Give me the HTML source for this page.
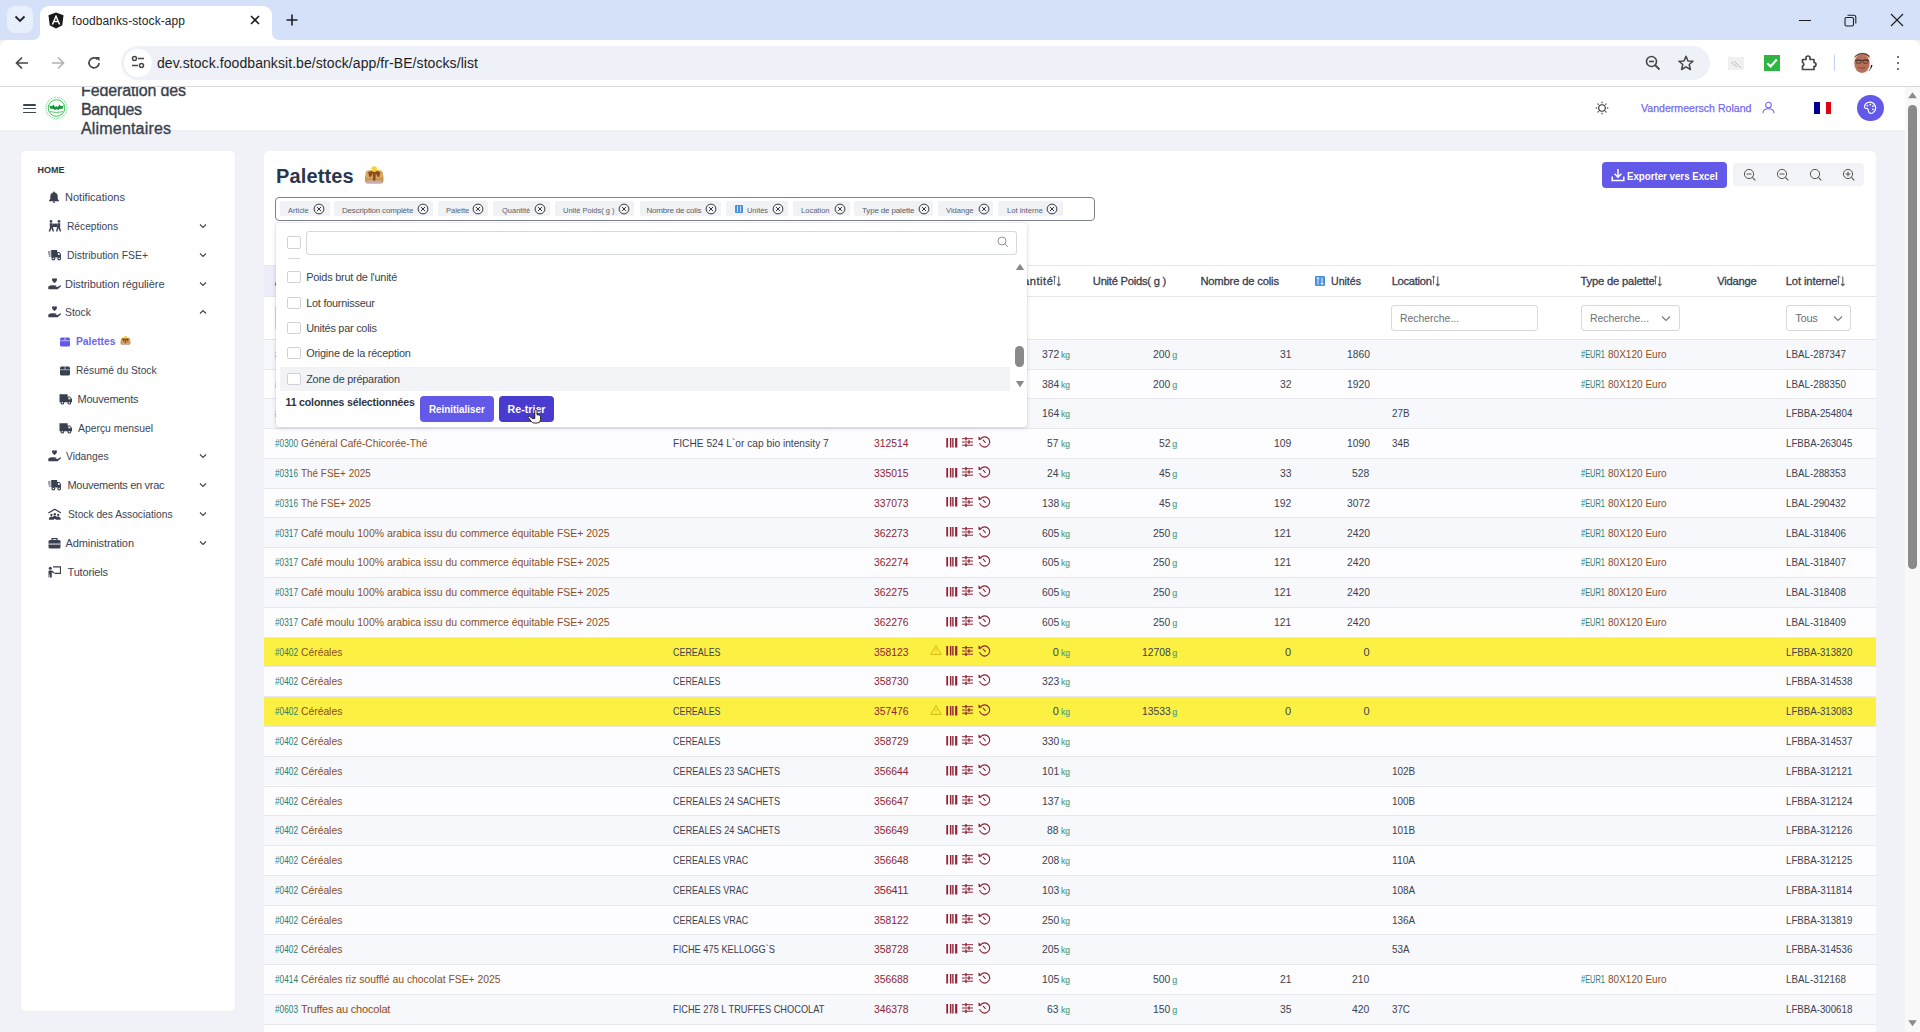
<!DOCTYPE html><html><head><meta charset="utf-8"><title>foodbanks-stock-app</title><style>
*{margin:0;padding:0}
html,body{width:1920px;height:1032px;overflow:hidden}
body{position:relative;background:#f1f2f7;font-family:"Liberation Sans",sans-serif;}
.t{position:absolute;white-space:nowrap}
.r{position:absolute;display:block}
</style></head><body><div class="r" style="left:0.00px;top:87.00px;width:1905.00px;height:43.00px;background:#ffffff;box-shadow:0 1px 2px rgba(0,0,0,0.02);"></div>
<div class="r" style="left:23.00px;top:104.30px;width:13.00px;height:1.40px;background:#3d4350;border-radius:1px;"></div>
<div class="r" style="left:23.00px;top:107.90px;width:13.00px;height:1.40px;background:#3d4350;border-radius:1px;"></div>
<div class="r" style="left:23.00px;top:111.50px;width:13.00px;height:1.40px;background:#3d4350;border-radius:1px;"></div>
<svg class="r" style="left:45.00px;top:96.00px;" width="23" height="24" viewBox="0 0 23 24"><circle cx="11.5" cy="12" r="10.6" fill="none" stroke="#8fdc9f" stroke-width="1.1" stroke-dasharray="1.2 0.8"/><circle cx="11.5" cy="12" r="8.3" fill="none" stroke="#3cc45a" stroke-width="1"/><path d="M4.2 9.6 L7 10.2 L8.6 8.4 L10 11 L11.5 10.3 L13 11 L14.4 8.4 L16 10.2 L18.8 9.6 L17.3 13 Q14.5 12.4 13.5 14 L11.5 13.2 L9.5 14 Q8.5 12.4 5.7 13 Z" fill="#14963a"/><path d="M4.6 15.6 Q11.5 17.4 18.4 15.6" fill="none" stroke="#3cc45a" stroke-width="0.9"/></svg>
<div class="t" style="left:81.00px;top:78.00px;font-size:16px;line-height:26px;color:#3a3f4b;letter-spacing:-0.133px;-webkit-text-stroke:0.35px #3a3f4b;">Federation des</div>
<div class="t" style="left:81.00px;top:97.00px;font-size:16px;line-height:26px;color:#3a3f4b;letter-spacing:-0.361px;-webkit-text-stroke:0.35px #3a3f4b;">Banques</div>
<div class="t" style="left:81.00px;top:116.00px;font-size:16px;line-height:26px;color:#3a3f4b;letter-spacing:0.179px;-webkit-text-stroke:0.35px #3a3f4b;">Alimentaires</div>
<svg class="r" style="left:1595.00px;top:101.00px;" width="14" height="14" viewBox="0 0 14 14"><circle cx="7" cy="7" r="3.3" fill="none" stroke="#333" stroke-width="1.1"/><path d="M11.80 7.00 L13.30 7.00" stroke="#333" stroke-width="1.1"/><path d="M10.39 10.39 L11.45 11.45" stroke="#333" stroke-width="1.1"/><path d="M7.00 11.80 L7.00 13.30" stroke="#333" stroke-width="1.1"/><path d="M3.61 10.39 L2.55 11.45" stroke="#333" stroke-width="1.1"/><path d="M2.20 7.00 L0.70 7.00" stroke="#333" stroke-width="1.1"/><path d="M3.61 3.61 L2.55 2.55" stroke="#333" stroke-width="1.1"/><path d="M7.00 2.20 L7.00 0.70" stroke="#333" stroke-width="1.1"/><path d="M10.39 3.61 L11.45 2.55" stroke="#333" stroke-width="1.1"/></svg>
<div class="t" style="left:1641.00px;top:98.00px;font-size:11.6px;line-height:19px;color:#7468f0;transform:scaleX(0.9132);transform-origin:0 50%;-webkit-text-stroke:0.25px #7468f0;">Vandermeersch Roland</div>
<svg class="r" style="left:1762.00px;top:101.00px;" width="13" height="13" viewBox="0 0 13 13"><circle cx="6.5" cy="4" r="2.8" fill="none" stroke="#7468f0" stroke-width="1.1"/><path d="M1 12.2 Q1 7.8 6.5 7.8 Q12 7.8 12 12.2" fill="none" stroke="#7468f0" stroke-width="1.1"/></svg>
<div class="r" style="left:1814.00px;top:102.30px;width:5.50px;height:12.00px;background:#000091;"></div>
<div class="r" style="left:1825.50px;top:102.30px;width:5.50px;height:12.00px;background:#e1000f;"></div>
<div class="r" style="left:1857.00px;top:94.80px;width:26.80px;height:26.70px;background:#6259e8;border-radius:50%;"></div>
<svg class="r" style="left:1863.00px;top:101.00px;" width="14" height="14" viewBox="0 0 14 14"><path d="M7 1.2 C3.5 1.2 1.2 3.6 1.5 6.4 C1.8 7.6 3 7.3 4 7.4 C5.5 7.6 5.2 9.5 5.8 11 C6.4 12.6 8.7 12.8 10.2 11.6 C12.5 9.8 13 6.6 12 4.4 C11 2.4 9.2 1.2 7 1.2 Z" fill="none" stroke="#fff" stroke-width="1.2"/><circle cx="4.4" cy="4.6" r="0.9" fill="#fff"/><circle cx="7.3" cy="3.6" r="0.9" fill="#fff"/><circle cx="10" cy="5.2" r="0.9" fill="#fff"/><circle cx="9.9" cy="8.3" r="0.9" fill="#fff"/></svg>
<div class="r" style="left:1905.00px;top:87.00px;width:15.00px;height:945.00px;background:#f8f8f8;"></div>
<svg class="r" style="left:1907.00px;top:91.00px;" width="11" height="8" viewBox="0 0 11 8"><path d="M1.2 7.2 L5.5 1.2 L9.8 7.2 Z" fill="#8a8a8a"/></svg>
<div class="r" style="left:1908.30px;top:105.20px;width:8.60px;height:463.60px;background:#8a8a8a;border-radius:4.3px;"></div>
<svg class="r" style="left:1907.00px;top:1019.00px;" width="11" height="8" viewBox="0 0 11 8"><path d="M1.2 1.2 L5.5 7.2 L9.8 1.2 Z" fill="#8a8a8a"/></svg>
<div class="r" style="left:21.00px;top:151.00px;width:213.50px;height:860.00px;background:#ffffff;border-radius:5px;box-shadow:0 0 2px rgba(60,60,90,0.04);"></div>
<div class="t" style="left:37.50px;top:163.00px;font-size:9px;line-height:14px;color:#2e3442;font-weight:bold;">HOME</div>
<svg class="r" style="left:48.00px;top:190.70px;" width="13" height="12" viewBox="0 0 13 12"><path d="M6 0.6 C6.5 0.6 6.8 1 6.8 1.4 C8.8 1.8 9.7 3.4 9.7 5.4 V7.6 Q9.8 8.6 11 9.6 V10.2 H1 V9.6 Q2.2 8.6 2.3 7.6 V5.4 C2.3 3.4 3.2 1.8 5.2 1.4 C5.2 1 5.5 0.6 6 0.6 Z" fill="#3a4050"/><path d="M4.7 10.6 H7.3 Q7.2 12 6 12 Q4.8 12 4.7 10.6 Z" fill="#3a4050"/></svg>
<div class="t" style="left:65.00px;top:188.00px;font-size:11px;line-height:18px;color:#3d4352;letter-spacing:0.007px;">Notifications</div>
<svg class="r" style="left:48.00px;top:219.70px;" width="13" height="12" viewBox="0 0 13 12"><circle cx="3" cy="1.4" r="1.35" fill="#3a4050"/><circle cx="11" cy="1.4" r="1.35" fill="#3a4050"/><path d="M1.6 3.3 H4.4 L5 7.2 L6 11.6 H4.6 L3.6 8 L2.2 11.6 H0.6 L2 7.4 Z" fill="#3a4050"/><path d="M12.4 3.3 H9.6 L9 7.2 L8 11.6 H9.4 L10.4 8 L11.8 11.6 H13.4 L12 7.4 Z" fill="#3a4050"/><rect x="4.6" y="3.6" width="4.8" height="3.4" fill="#3a4050"/></svg>
<div class="t" style="left:67.00px;top:217.00px;font-size:11px;line-height:18px;color:#3d4352;transform:scaleX(0.9267);transform-origin:0 50%;">Réceptions</div>
<svg class="r" style="left:199.00px;top:223.00px;" width="8" height="6" viewBox="0 0 8 6"><path d="M1 1.5 L4 4.5 L7 1.5" fill="none" stroke="#3d4352" stroke-width="1.1"/></svg>
<svg class="r" style="left:48.00px;top:248.70px;" width="13" height="12" viewBox="0 0 13 12"><path d="M3.2 1 H9.2 V3 H11.4 L13.6 5.6 V8.6 H3.2 Z" fill="#3a4050"/><path d="M9.9 3.9 H11 L12.4 5.7 H9.9 Z" fill="#fff"/><path d="M0 3 H2.6 M0.3 5 H2.6 M0.8 7 H2.6" stroke="#3a4050" stroke-width="1.1"/><circle cx="5.4" cy="9.6" r="1.9" fill="#3a4050"/><circle cx="5.4" cy="9.6" r="0.75" fill="#fff"/><circle cx="11.2" cy="9.6" r="1.9" fill="#3a4050"/><circle cx="11.2" cy="9.6" r="0.75" fill="#fff"/></svg>
<div class="t" style="left:67.00px;top:246.00px;font-size:11px;line-height:18px;color:#3d4352;transform:scaleX(0.9430);transform-origin:0 50%;">Distribution FSE+</div>
<svg class="r" style="left:199.00px;top:252.00px;" width="8" height="6" viewBox="0 0 8 6"><path d="M1 1.5 L4 4.5 L7 1.5" fill="none" stroke="#3d4352" stroke-width="1.1"/></svg>
<svg class="r" style="left:48.00px;top:277.70px;" width="13" height="12" viewBox="0 0 13 12"><path d="M6.5 0.8 C5.8 0 4 0 4 1.8 C4 3.3 6.5 5 6.5 5 C6.5 5 9 3.3 9 1.8 C9 0 7.2 0 6.5 0.8 Z" fill="#3a4050"/><path d="M0.3 8.5 Q2.5 7 5 7.3 L8 7.6 Q9 8 8 8.8 H5.5 L9.5 9 L12.5 7.2 Q13.3 7.5 12.8 8.5 L9.5 11.2 H0.3 Z" fill="#3a4050"/></svg>
<div class="t" style="left:65.00px;top:275.00px;font-size:11px;line-height:18px;color:#3d4352;letter-spacing:-0.066px;">Distribution régulière</div>
<svg class="r" style="left:199.00px;top:281.00px;" width="8" height="6" viewBox="0 0 8 6"><path d="M1 1.5 L4 4.5 L7 1.5" fill="none" stroke="#3d4352" stroke-width="1.1"/></svg>
<svg class="r" style="left:48.00px;top:305.70px;" width="13" height="12" viewBox="0 0 13 12"><path d="M6.5 0.8 C5.8 0 4 0 4 1.8 C4 3.3 6.5 5 6.5 5 C6.5 5 9 3.3 9 1.8 C9 0 7.2 0 6.5 0.8 Z" fill="#3a4050"/><path d="M0.3 8.5 Q2.5 7 5 7.3 L8 7.6 Q9 8 8 8.8 H5.5 L9.5 9 L12.5 7.2 Q13.3 7.5 12.8 8.5 L9.5 11.2 H0.3 Z" fill="#3a4050"/></svg>
<div class="t" style="left:65.00px;top:303.00px;font-size:11px;line-height:18px;color:#3d4352;transform:scaleX(0.9451);transform-origin:0 50%;">Stock</div>
<svg class="r" style="left:199.00px;top:309.00px;" width="8" height="6" viewBox="0 0 8 6"><path d="M1 4.5 L4 1.5 L7 4.5" fill="none" stroke="#3d4352" stroke-width="1.1"/></svg>
<svg class="r" style="left:59.00px;top:363.70px;" width="13" height="12" viewBox="0 0 13 12"><rect x="1" y="2.5" width="10" height="9" rx="1.5" fill="#3a4050"/><rect x="1" y="5.3" width="10" height="0.9" fill="#fff" opacity="0.6"/><rect x="5.5" y="2.5" width="1" height="3" fill="#fff" opacity="0.6"/></svg>
<div class="t" style="left:76.00px;top:361.00px;font-size:11px;line-height:18px;color:#3d4352;transform:scaleX(0.9272);transform-origin:0 50%;">Résumé du Stock</div>
<svg class="r" style="left:59.00px;top:392.70px;" width="13" height="12" viewBox="0 0 13 12"><path d="M0.5 1.2 H8.6 V3.4 H10.9 L13.2 6.2 V9.2 H0.5 Z" fill="#3a4050"/><path d="M9.4 4.3 H10.4 L11.9 6.2 H9.4 Z" fill="#fff"/><circle cx="3.4" cy="9.7" r="1.9" fill="#3a4050"/><circle cx="3.4" cy="9.7" r="0.75" fill="#fff"/><circle cx="10.3" cy="9.7" r="1.9" fill="#3a4050"/><circle cx="10.3" cy="9.7" r="0.75" fill="#fff"/></svg>
<div class="t" style="left:77.50px;top:390.00px;font-size:11px;line-height:18px;color:#3d4352;letter-spacing:-0.219px;">Mouvements</div>
<svg class="r" style="left:59.00px;top:421.70px;" width="13" height="12" viewBox="0 0 13 12"><path d="M0.5 1.2 H8.6 V3.4 H10.9 L13.2 6.2 V9.2 H0.5 Z" fill="#3a4050"/><path d="M9.4 4.3 H10.4 L11.9 6.2 H9.4 Z" fill="#fff"/><circle cx="3.4" cy="9.7" r="1.9" fill="#3a4050"/><circle cx="3.4" cy="9.7" r="0.75" fill="#fff"/><circle cx="10.3" cy="9.7" r="1.9" fill="#3a4050"/><circle cx="10.3" cy="9.7" r="0.75" fill="#fff"/></svg>
<div class="t" style="left:77.50px;top:419.00px;font-size:11px;line-height:18px;color:#3d4352;transform:scaleX(0.9435);transform-origin:0 50%;">Aperçu mensuel</div>
<svg class="r" style="left:48.00px;top:449.70px;" width="13" height="12" viewBox="0 0 13 12"><path d="M6.5 0.8 C5.8 0 4 0 4 1.8 C4 3.3 6.5 5 6.5 5 C6.5 5 9 3.3 9 1.8 C9 0 7.2 0 6.5 0.8 Z" fill="#3a4050"/><path d="M0.3 8.5 Q2.5 7 5 7.3 L8 7.6 Q9 8 8 8.8 H5.5 L9.5 9 L12.5 7.2 Q13.3 7.5 12.8 8.5 L9.5 11.2 H0.3 Z" fill="#3a4050"/></svg>
<div class="t" style="left:66.00px;top:447.00px;font-size:11px;line-height:18px;color:#3d4352;transform:scaleX(0.9306);transform-origin:0 50%;">Vidanges</div>
<svg class="r" style="left:199.00px;top:453.00px;" width="8" height="6" viewBox="0 0 8 6"><path d="M1 1.5 L4 4.5 L7 1.5" fill="none" stroke="#3d4352" stroke-width="1.1"/></svg>
<svg class="r" style="left:48.00px;top:478.70px;" width="13" height="12" viewBox="0 0 13 12"><path d="M3.2 1 H9.2 V3 H11.4 L13.6 5.6 V8.6 H3.2 Z" fill="#3a4050"/><path d="M9.9 3.9 H11 L12.4 5.7 H9.9 Z" fill="#fff"/><path d="M0 3 H2.6 M0.3 5 H2.6 M0.8 7 H2.6" stroke="#3a4050" stroke-width="1.1"/><circle cx="5.4" cy="9.6" r="1.9" fill="#3a4050"/><circle cx="5.4" cy="9.6" r="0.75" fill="#fff"/><circle cx="11.2" cy="9.6" r="1.9" fill="#3a4050"/><circle cx="11.2" cy="9.6" r="0.75" fill="#fff"/></svg>
<div class="t" style="left:67.50px;top:476.00px;font-size:11px;line-height:18px;color:#3d4352;letter-spacing:-0.300px;">Mouvements en vrac</div>
<svg class="r" style="left:199.00px;top:482.00px;" width="8" height="6" viewBox="0 0 8 6"><path d="M1 1.5 L4 4.5 L7 1.5" fill="none" stroke="#3d4352" stroke-width="1.1"/></svg>
<svg class="r" style="left:48.00px;top:507.70px;" width="13" height="12" viewBox="0 0 13 12"><path d="M6.8 0.6 L13.6 4.6 L12.9 5.5 L6.8 2 L0.7 5.5 L0 4.6 Z" fill="#3a4050"/><circle cx="3.4" cy="7" r="1.15" fill="#3a4050"/><circle cx="6.8" cy="6.3" r="1.2" fill="#3a4050"/><circle cx="10.2" cy="7" r="1.15" fill="#3a4050"/><path d="M0.8 11.8 Q1.2 8.5 3.4 8.5 Q5.6 8.5 6 11.8 Z M7.6 11.8 Q8 8.5 10.2 8.5 Q12.4 8.5 12.8 11.8 Z M4.2 11 Q4.6 7.8 6.8 7.8 Q9 7.8 9.4 11 Z" fill="#3a4050"/></svg>
<div class="t" style="left:67.50px;top:505.00px;font-size:11px;line-height:18px;color:#3d4352;transform:scaleX(0.9289);transform-origin:0 50%;">Stock des Associations</div>
<svg class="r" style="left:199.00px;top:511.00px;" width="8" height="6" viewBox="0 0 8 6"><path d="M1 1.5 L4 4.5 L7 1.5" fill="none" stroke="#3d4352" stroke-width="1.1"/></svg>
<svg class="r" style="left:48.00px;top:536.70px;" width="13" height="12" viewBox="0 0 13 12"><path d="M4 3 V1.6 H9 V3" fill="none" stroke="#3a4050" stroke-width="1.2"/><rect x="0.5" y="3" width="12" height="8.5" rx="1.5" fill="#3a4050"/><rect x="0.5" y="6.6" width="12" height="0.9" fill="#fff"/></svg>
<div class="t" style="left:65.50px;top:534.00px;font-size:11px;line-height:18px;color:#3d4352;letter-spacing:-0.092px;">Administration</div>
<svg class="r" style="left:199.00px;top:540.00px;" width="8" height="6" viewBox="0 0 8 6"><path d="M1 1.5 L4 4.5 L7 1.5" fill="none" stroke="#3d4352" stroke-width="1.1"/></svg>
<svg class="r" style="left:48.00px;top:565.70px;" width="13" height="12" viewBox="0 0 13 12"><circle cx="2.3" cy="2.2" r="1.5" fill="#3a4050"/><path d="M0.8 4.5 H4 L6.5 6.5 L5.8 7.3 L3.8 6.2 V11.5 H1.8 V8.5 H1.2 V11.5 H0.5 V5 Z" fill="#3a4050"/><path d="M5 0.8 H12.5 V7.3 H6.5" fill="none" stroke="#3a4050" stroke-width="1.2"/></svg>
<div class="t" style="left:67.50px;top:563.00px;font-size:11px;line-height:18px;color:#3d4352;letter-spacing:-0.159px;">Tutoriels</div>
<svg class="r" style="left:59.00px;top:334.70px;" width="13" height="12" viewBox="0 0 13 12"><rect x="1" y="2.5" width="10" height="9" rx="1.5" fill="#6259e8"/><rect x="1" y="5.3" width="10" height="0.9" fill="#fff" opacity="0.6"/><rect x="5.5" y="2.5" width="1" height="3" fill="#fff" opacity="0.6"/></svg>
<div class="t" style="left:76.00px;top:332.00px;font-size:11.2px;line-height:18px;color:#6f63ee;font-weight:bold;transform:scaleX(0.9195);transform-origin:0 50%;">Palettes</div>
<svg class="r" style="left:119.50px;top:334.50px;" width="11" height="11" viewBox="0 0 11 11"><g transform="scale(0.55)"><rect x="1" y="9" width="18" height="9" rx="3" fill="#c89650"/><rect x="1.5" y="5" width="17" height="8" rx="3.5" fill="#d9a95c"/><path d="M4 7 Q10 3.5 16 7 L15 11 Q14 13 13 11 L11.5 8 L11 16 L9 16 L8.5 8 L7 11 Q6 13 5 11 Z" fill="#8a4b22"/><circle cx="10" cy="4" r="2.8" fill="#f5d23a"/><rect x="2" y="15" width="16" height="3" rx="1.5" fill="#c9b7d8" opacity="0.7"/></g></svg>
<div class="r" style="left:264.00px;top:151.00px;width:1612.00px;height:889.00px;background:#ffffff;border-radius:5px 5px 0 0;"></div>
<div class="t" style="left:276.00px;top:160.00px;font-size:20px;line-height:32px;color:#2a3650;font-weight:bold;letter-spacing:0.141px;">Palettes</div>
<svg class="r" style="left:364.30px;top:165.00px;" width="20.5" height="20.5" viewBox="0 0 20.5 20.5"><g transform="scale(1.025)"><rect x="1" y="9" width="18" height="9" rx="3" fill="#c89650"/><rect x="1.5" y="5" width="17" height="8" rx="3.5" fill="#d9a95c"/><path d="M4 7 Q10 3.5 16 7 L15 11 Q14 13 13 11 L11.5 8 L11 16 L9 16 L8.5 8 L7 11 Q6 13 5 11 Z" fill="#8a4b22"/><circle cx="10" cy="4" r="2.8" fill="#f5d23a"/><rect x="2" y="15" width="16" height="3" rx="1.5" fill="#c9b7d8" opacity="0.7"/></g></svg>
<div class="r" style="left:1602.00px;top:162.00px;width:124.70px;height:25.80px;background:#6259e8;border-radius:4px;"></div>
<svg class="r" style="left:1611.00px;top:167.50px;" width="14" height="14" viewBox="0 0 14 14"><path d="M7 1 V9 M3.6 5.8 L7 9.2 L10.4 5.8" fill="none" stroke="#fff" stroke-width="1.5"/><path d="M1.2 8.5 V12.5 H12.8 V8.5" fill="none" stroke="#fff" stroke-width="1.5"/></svg>
<div class="t" style="left:1627.00px;top:168.00px;font-size:10.8px;line-height:17px;color:#ffffff;font-weight:bold;transform:scaleX(0.8983);transform-origin:0 50%;">Exporter vers Excel</div>
<div class="r" style="left:1733.00px;top:163.30px;width:131.00px;height:23.00px;background:#f2f3f7;border-radius:4px;"></div>
<svg class="r" style="left:1742.50px;top:168.00px;" width="13" height="13" viewBox="0 0 13 13"><circle cx="6" cy="6" r="4.6" fill="none" stroke="#555" stroke-width="1"/><path d="M9.4 9.4 L12.3 12.3" stroke="#555" stroke-width="1.1"/><path d="M3.5 6 H8.5" stroke="#555" stroke-width="1"/></svg>
<svg class="r" style="left:1775.50px;top:168.00px;" width="13" height="13" viewBox="0 0 13 13"><circle cx="6" cy="6" r="4.6" fill="none" stroke="#555" stroke-width="1"/><path d="M9.4 9.4 L12.3 12.3" stroke="#555" stroke-width="1.1"/><path d="M3.5 6 H8.5" stroke="#555" stroke-width="1"/></svg>
<svg class="r" style="left:1808.50px;top:168.00px;" width="13" height="13" viewBox="0 0 13 13"><circle cx="6" cy="6" r="4.6" fill="none" stroke="#555" stroke-width="1"/><path d="M9.4 9.4 L12.3 12.3" stroke="#555" stroke-width="1.1"/></svg>
<svg class="r" style="left:1841.50px;top:168.00px;" width="13" height="13" viewBox="0 0 13 13"><circle cx="6" cy="6" r="4.6" fill="none" stroke="#555" stroke-width="1"/><path d="M9.4 9.4 L12.3 12.3" stroke="#555" stroke-width="1.1"/><path d="M3.5 6 H8.5 M6 3.5 V8.5" stroke="#555" stroke-width="1"/></svg>
<div class="r" style="left:264.00px;top:266.10px;width:396.00px;height:29.70px;background:#ededf9;"></div>
<div class="r" style="left:264.00px;top:265.10px;width:1612.00px;height:1.00px;background:#e6e7ee;"></div>
<div class="r" style="left:264.00px;top:295.80px;width:1612.00px;height:1.00px;background:#e6e7ee;"></div>
<div class="t" style="left:275.00px;top:272.00px;font-size:11.2px;line-height:18px;color:#3a4050;transform:scaleX(0.9293);transform-origin:0 50%;-webkit-text-stroke:0.3px #3a4050;">Article</div>
<svg class="r" style="left:302.42px;top:274.50px;" width="10" height="12" viewBox="0 0 10 12"><path d="M2.5 0.8 V9.5 M1 2.6 L2.5 0.8 L4 2.6" fill="none" stroke="#5a5f6c" stroke-width="0.9"/><path d="M6.8 1.5 V10.8 M5.1 9 L6.8 10.8 L8.5 9" fill="none" stroke="#5a5f6c" stroke-width="1.1"/></svg>
<div class="t" style="left:673.00px;top:272.00px;font-size:11.2px;line-height:18px;color:#3a4050;letter-spacing:-0.248px;-webkit-text-stroke:0.3px #3a4050;">Description complète</div>
<div class="t" style="left:873.00px;top:272.00px;font-size:11.2px;line-height:18px;color:#3a4050;transform:scaleX(0.9334);transform-origin:0 50%;-webkit-text-stroke:0.3px #3a4050;">Palette</div>
<svg class="r" style="left:904.05px;top:274.50px;" width="10" height="12" viewBox="0 0 10 12"><path d="M2.5 0.8 V9.5 M1 2.6 L2.5 0.8 L4 2.6" fill="none" stroke="#5a5f6c" stroke-width="0.9"/><path d="M6.8 1.5 V10.8 M5.1 9 L6.8 10.8 L8.5 9" fill="none" stroke="#5a5f6c" stroke-width="1.1"/></svg>
<div class="t" style="left:1007.00px;top:272.00px;font-size:11.2px;line-height:18px;color:#3a4050;letter-spacing:0.523px;-webkit-text-stroke:0.3px #3a4050;">Quantité</div>
<svg class="r" style="left:1051.50px;top:274.50px;" width="10" height="12" viewBox="0 0 10 12"><path d="M2.5 0.8 V9.5 M1 2.6 L2.5 0.8 L4 2.6" fill="none" stroke="#5a5f6c" stroke-width="0.9"/><path d="M6.8 1.5 V10.8 M5.1 9 L6.8 10.8 L8.5 9" fill="none" stroke="#5a5f6c" stroke-width="1.1"/></svg>
<div class="t" style="left:1092.80px;top:272.00px;font-size:11.2px;line-height:18px;color:#3a4050;letter-spacing:-0.246px;-webkit-text-stroke:0.3px #3a4050;">Unité Poids( g )</div>
<div class="t" style="left:1200.40px;top:272.00px;font-size:11.2px;line-height:18px;color:#3a4050;letter-spacing:-0.159px;-webkit-text-stroke:0.3px #3a4050;">Nombre de colis</div>
<div class="t" style="left:1331.00px;top:272.00px;font-size:11.2px;line-height:18px;color:#3a4050;transform:scaleX(0.9450);transform-origin:0 50%;-webkit-text-stroke:0.3px #3a4050;">Unités</div>
<div class="t" style="left:1391.70px;top:272.00px;font-size:11.2px;line-height:18px;color:#3a4050;letter-spacing:-0.292px;-webkit-text-stroke:0.3px #3a4050;">Location</div>
<svg class="r" style="left:1430.50px;top:274.50px;" width="10" height="12" viewBox="0 0 10 12"><path d="M2.5 0.8 V9.5 M1 2.6 L2.5 0.8 L4 2.6" fill="none" stroke="#5a5f6c" stroke-width="0.9"/><path d="M6.8 1.5 V10.8 M5.1 9 L6.8 10.8 L8.5 9" fill="none" stroke="#5a5f6c" stroke-width="1.1"/></svg>
<div class="t" style="left:1580.50px;top:272.00px;font-size:11.2px;line-height:18px;color:#3a4050;letter-spacing:-0.171px;-webkit-text-stroke:0.3px #3a4050;">Type de palette</div>
<svg class="r" style="left:1653.20px;top:274.50px;" width="10" height="12" viewBox="0 0 10 12"><path d="M2.5 0.8 V9.5 M1 2.6 L2.5 0.8 L4 2.6" fill="none" stroke="#5a5f6c" stroke-width="0.9"/><path d="M6.8 1.5 V10.8 M5.1 9 L6.8 10.8 L8.5 9" fill="none" stroke="#5a5f6c" stroke-width="1.1"/></svg>
<div class="t" style="left:1717.20px;top:272.00px;font-size:11.2px;line-height:18px;color:#3a4050;letter-spacing:-0.217px;-webkit-text-stroke:0.3px #3a4050;">Vidange</div>
<div class="t" style="left:1785.70px;top:272.00px;font-size:11.2px;line-height:18px;color:#3a4050;letter-spacing:-0.103px;-webkit-text-stroke:0.3px #3a4050;">Lot interne</div>
<svg class="r" style="left:1836.10px;top:274.50px;" width="10" height="12" viewBox="0 0 10 12"><path d="M2.5 0.8 V9.5 M1 2.6 L2.5 0.8 L4 2.6" fill="none" stroke="#5a5f6c" stroke-width="0.9"/><path d="M6.8 1.5 V10.8 M5.1 9 L6.8 10.8 L8.5 9" fill="none" stroke="#5a5f6c" stroke-width="1.1"/></svg>
<svg class="r" style="left:1315.00px;top:275.50px;" width="10" height="10" viewBox="0 0 10 10"><rect x="0" y="0" width="10" height="10" rx="1" fill="#4a8fe0"/><path d="M3 1.5 V8.5 M7 1.5 V8.5 M1.8 3 L3 1.5 L4.2 3 M5.8 7 L7 8.5 L8.2 7" fill="none" stroke="#fff" stroke-width="0.9"/></svg>
<div class="r" style="left:275.00px;top:305.40px;width:285.00px;height:25.20px;background:#ffffff;border:1px solid #d7d9de;border-radius:3px;box-sizing:border-box;"></div>
<div class="t" style="left:284.00px;top:309.00px;font-size:11px;line-height:18px;color:#6b6f78;transform:scaleX(0.9470);transform-origin:0 50%;">Recherche...</div>
<div class="r" style="left:673.00px;top:305.40px;width:187.00px;height:25.20px;background:#ffffff;border:1px solid #d7d9de;border-radius:3px;box-sizing:border-box;"></div>
<div class="t" style="left:682.00px;top:309.00px;font-size:11px;line-height:18px;color:#6b6f78;transform:scaleX(0.9470);transform-origin:0 50%;">Recherche...</div>
<div class="r" style="left:1391.20px;top:305.40px;width:146.40px;height:25.20px;background:#ffffff;border:1px solid #d7d9de;border-radius:3px;box-sizing:border-box;"></div>
<div class="t" style="left:1400.20px;top:309.00px;font-size:11px;line-height:18px;color:#6b6f78;transform:scaleX(0.9470);transform-origin:0 50%;">Recherche...</div>
<div class="r" style="left:1580.50px;top:305.40px;width:99.00px;height:25.20px;background:#ffffff;border:1px solid #d7d9de;border-radius:3px;box-sizing:border-box;"></div>
<div class="t" style="left:1589.50px;top:309.00px;font-size:11px;line-height:18px;color:#6b6f78;transform:scaleX(0.9470);transform-origin:0 50%;">Recherche...</div>
<svg class="r" style="left:1661.00px;top:315.00px;" width="10" height="7" viewBox="0 0 10 7"><path d="M1 1.5 L5 5.5 L9 1.5" fill="none" stroke="#777" stroke-width="1.1"/></svg>
<div class="r" style="left:1786.20px;top:305.40px;width:65.20px;height:25.20px;background:#ffffff;border:1px solid #d7d9de;border-radius:3px;box-sizing:border-box;"></div>
<div class="t" style="left:1795.20px;top:309.00px;font-size:11px;line-height:18px;color:#6b6f78;letter-spacing:-0.214px;">Tous</div>
<svg class="r" style="left:1832.90px;top:315.00px;" width="10" height="7" viewBox="0 0 10 7"><path d="M1 1.5 L5 5.5 L9 1.5" fill="none" stroke="#777" stroke-width="1.1"/></svg>
<div class="r" style="left:264.00px;top:338.80px;width:1612.00px;height:1.00px;background:#e6e7ee;"></div>
<div class="r" style="left:264.00px;top:339.80px;width:1612.00px;height:28.78px;background:#f7f8fc;"></div>
<div class="r" style="left:264.00px;top:368.58px;width:1612.00px;height:1.00px;background:#e7e8ee;"></div>
<div class="t" style="left:275.00px;top:346.00px;font-size:10.4px;line-height:17px;color:#2a7d70;transform:scaleX(0.7953);transform-origin:0 50%;">#0300</div>
<div class="t" style="left:301.00px;top:345.00px;font-size:11px;line-height:18px;color:#8c4e1c;transform:scaleX(0.9310);transform-origin:0 50%;">Général Café-Chicorée-Thé</div>
<div class="t" style="left:673.00px;top:345.00px;font-size:11px;line-height:18px;color:#3b4150;transform:scaleX(0.9265);transform-origin:0 50%;">FICHE 524 L`or cap bio intensity 7</div>
<div class="t" style="left:874.00px;top:345.00px;font-size:11px;line-height:18px;color:#8e2436;transform:scaleX(0.9400);transform-origin:0 50%;">312514</div>
<svg class="r" style="left:946.00px;top:348.59px;" width="12" height="10" viewBox="0 0 12 10"><rect x="0.3" y="0" width="1.8" height="9.5" fill="#8e2436"/><rect x="3.9" y="0" width="1.5" height="9.5" fill="#8e2436"/><rect x="6.2" y="0" width="1.4" height="9.5" fill="#8e2436"/><rect x="9.1" y="0" width="2.2" height="9.5" fill="#8e2436"/></svg>
<svg class="r" style="left:962.30px;top:347.89px;" width="12" height="10" viewBox="0 0 12 10"><path d="M0 1.7 H11 M0 5 H11 M0 8.2 H11" stroke="#8e2436" stroke-width="1"/><path d="M4 0 V3.4 M7 3.3 V6.7 M4 6.5 V9.9" stroke="#8e2436" stroke-width="1.4"/></svg>
<svg class="r" style="left:977.50px;top:346.89px;" width="13" height="12" viewBox="0 0 13 12"><path d="M2.7 2.6 A5.1 5.1 0 1 1 1.6 7.2" fill="none" stroke="#8e2436" stroke-width="1.1"/><path d="M0.8 0.8 L3.3 3.2 L0.9 3.9 Z" fill="#8e2436" stroke="#8e2436" stroke-width="0.6"/><path d="M5 3.8 L7.6 6.8" fill="none" stroke="#8e2436" stroke-width="1.1"/></svg>
<div class="t" style="left:1041.55px;top:345.00px;font-size:11px;line-height:18px;color:#3b4150;transform:scaleX(0.9400);transform-origin:0 50%;">372</div>
<div class="t" style="left:1060.80px;top:348.00px;font-size:9px;line-height:14px;color:#56a07f;transform:scaleX(0.9468);transform-origin:0 50%;-webkit-text-stroke:0.15px #56a07f;">kg</div>
<div class="t" style="left:1153.25px;top:345.00px;font-size:11px;line-height:18px;color:#3b4150;transform:scaleX(0.9400);transform-origin:0 50%;">200</div>
<div class="t" style="left:1172.30px;top:348.00px;font-size:9px;line-height:14px;color:#56a07f;-webkit-text-stroke:0.15px #56a07f;">g</div>
<div class="t" style="left:1279.50px;top:345.00px;font-size:11px;line-height:18px;color:#3b4150;transform:scaleX(0.9400);transform-origin:0 50%;">31</div>
<div class="t" style="left:1346.50px;top:345.00px;font-size:11px;line-height:18px;color:#3b4150;transform:scaleX(0.9400);transform-origin:0 50%;">1860</div>
<div class="t" style="left:1580.60px;top:347.00px;font-size:10.2px;line-height:16px;color:#2a7d70;transform:scaleX(0.7299);transform-origin:0 50%;">#EUR1</div>
<div class="t" style="left:1608.20px;top:345.00px;font-size:11px;line-height:18px;color:#8c4e1c;transform:scaleX(0.9125);transform-origin:0 50%;">80X120 Euro</div>
<div class="t" style="left:1785.80px;top:345.00px;font-size:11px;line-height:18px;color:#3b4150;transform:scaleX(0.8895);transform-origin:0 50%;">LBAL-287347</div>
<div class="r" style="left:264.00px;top:369.58px;width:1612.00px;height:28.78px;background:#fdfdff;"></div>
<div class="r" style="left:264.00px;top:398.36px;width:1612.00px;height:1.00px;background:#e7e8ee;"></div>
<div class="t" style="left:275.00px;top:376.00px;font-size:10.4px;line-height:17px;color:#2a7d70;transform:scaleX(0.7953);transform-origin:0 50%;">#0300</div>
<div class="t" style="left:301.00px;top:375.00px;font-size:11px;line-height:18px;color:#8c4e1c;transform:scaleX(0.9310);transform-origin:0 50%;">Général Café-Chicorée-Thé</div>
<div class="t" style="left:673.00px;top:375.00px;font-size:11px;line-height:18px;color:#3b4150;transform:scaleX(0.9265);transform-origin:0 50%;">FICHE 524 L`or cap bio intensity 7</div>
<div class="t" style="left:874.00px;top:375.00px;font-size:11px;line-height:18px;color:#8e2436;transform:scaleX(0.9400);transform-origin:0 50%;">312514</div>
<svg class="r" style="left:946.00px;top:378.37px;" width="12" height="10" viewBox="0 0 12 10"><rect x="0.3" y="0" width="1.8" height="9.5" fill="#8e2436"/><rect x="3.9" y="0" width="1.5" height="9.5" fill="#8e2436"/><rect x="6.2" y="0" width="1.4" height="9.5" fill="#8e2436"/><rect x="9.1" y="0" width="2.2" height="9.5" fill="#8e2436"/></svg>
<svg class="r" style="left:962.30px;top:377.67px;" width="12" height="10" viewBox="0 0 12 10"><path d="M0 1.7 H11 M0 5 H11 M0 8.2 H11" stroke="#8e2436" stroke-width="1"/><path d="M4 0 V3.4 M7 3.3 V6.7 M4 6.5 V9.9" stroke="#8e2436" stroke-width="1.4"/></svg>
<svg class="r" style="left:977.50px;top:376.67px;" width="13" height="12" viewBox="0 0 13 12"><path d="M2.7 2.6 A5.1 5.1 0 1 1 1.6 7.2" fill="none" stroke="#8e2436" stroke-width="1.1"/><path d="M0.8 0.8 L3.3 3.2 L0.9 3.9 Z" fill="#8e2436" stroke="#8e2436" stroke-width="0.6"/><path d="M5 3.8 L7.6 6.8" fill="none" stroke="#8e2436" stroke-width="1.1"/></svg>
<div class="t" style="left:1041.55px;top:375.00px;font-size:11px;line-height:18px;color:#3b4150;transform:scaleX(0.9400);transform-origin:0 50%;">384</div>
<div class="t" style="left:1060.80px;top:378.00px;font-size:9px;line-height:14px;color:#56a07f;transform:scaleX(0.9468);transform-origin:0 50%;-webkit-text-stroke:0.15px #56a07f;">kg</div>
<div class="t" style="left:1153.25px;top:375.00px;font-size:11px;line-height:18px;color:#3b4150;transform:scaleX(0.9400);transform-origin:0 50%;">200</div>
<div class="t" style="left:1172.30px;top:378.00px;font-size:9px;line-height:14px;color:#56a07f;-webkit-text-stroke:0.15px #56a07f;">g</div>
<div class="t" style="left:1279.50px;top:375.00px;font-size:11px;line-height:18px;color:#3b4150;transform:scaleX(0.9400);transform-origin:0 50%;">32</div>
<div class="t" style="left:1346.50px;top:375.00px;font-size:11px;line-height:18px;color:#3b4150;transform:scaleX(0.9400);transform-origin:0 50%;">1920</div>
<div class="t" style="left:1580.60px;top:377.00px;font-size:10.2px;line-height:16px;color:#2a7d70;transform:scaleX(0.7299);transform-origin:0 50%;">#EUR1</div>
<div class="t" style="left:1608.20px;top:375.00px;font-size:11px;line-height:18px;color:#8c4e1c;transform:scaleX(0.9125);transform-origin:0 50%;">80X120 Euro</div>
<div class="t" style="left:1785.80px;top:375.00px;font-size:11px;line-height:18px;color:#3b4150;transform:scaleX(0.8895);transform-origin:0 50%;">LBAL-288350</div>
<div class="r" style="left:264.00px;top:399.36px;width:1612.00px;height:28.78px;background:#f7f8fc;"></div>
<div class="r" style="left:264.00px;top:428.14px;width:1612.00px;height:1.00px;background:#e7e8ee;"></div>
<div class="t" style="left:275.00px;top:405.00px;font-size:10.4px;line-height:17px;color:#2a7d70;transform:scaleX(0.7953);transform-origin:0 50%;">#0300</div>
<div class="t" style="left:301.00px;top:404.00px;font-size:11px;line-height:18px;color:#8c4e1c;transform:scaleX(0.9310);transform-origin:0 50%;">Général Café-Chicorée-Thé</div>
<div class="t" style="left:874.00px;top:404.00px;font-size:11px;line-height:18px;color:#8e2436;transform:scaleX(0.9400);transform-origin:0 50%;">312514</div>
<svg class="r" style="left:946.00px;top:408.15px;" width="12" height="10" viewBox="0 0 12 10"><rect x="0.3" y="0" width="1.8" height="9.5" fill="#8e2436"/><rect x="3.9" y="0" width="1.5" height="9.5" fill="#8e2436"/><rect x="6.2" y="0" width="1.4" height="9.5" fill="#8e2436"/><rect x="9.1" y="0" width="2.2" height="9.5" fill="#8e2436"/></svg>
<svg class="r" style="left:962.30px;top:407.45px;" width="12" height="10" viewBox="0 0 12 10"><path d="M0 1.7 H11 M0 5 H11 M0 8.2 H11" stroke="#8e2436" stroke-width="1"/><path d="M4 0 V3.4 M7 3.3 V6.7 M4 6.5 V9.9" stroke="#8e2436" stroke-width="1.4"/></svg>
<svg class="r" style="left:977.50px;top:406.45px;" width="13" height="12" viewBox="0 0 13 12"><path d="M2.7 2.6 A5.1 5.1 0 1 1 1.6 7.2" fill="none" stroke="#8e2436" stroke-width="1.1"/><path d="M0.8 0.8 L3.3 3.2 L0.9 3.9 Z" fill="#8e2436" stroke="#8e2436" stroke-width="0.6"/><path d="M5 3.8 L7.6 6.8" fill="none" stroke="#8e2436" stroke-width="1.1"/></svg>
<div class="t" style="left:1041.55px;top:404.00px;font-size:11px;line-height:18px;color:#3b4150;transform:scaleX(0.9400);transform-origin:0 50%;">164</div>
<div class="t" style="left:1060.80px;top:407.00px;font-size:9px;line-height:14px;color:#56a07f;transform:scaleX(0.9468);transform-origin:0 50%;-webkit-text-stroke:0.15px #56a07f;">kg</div>
<div class="t" style="left:1391.50px;top:404.00px;font-size:11px;line-height:18px;color:#3b4150;transform:scaleX(0.8913);transform-origin:0 50%;">27B</div>
<div class="t" style="left:1785.80px;top:404.00px;font-size:11px;line-height:18px;color:#3b4150;transform:scaleX(0.8811);transform-origin:0 50%;">LFBBA-254804</div>
<div class="r" style="left:264.00px;top:429.14px;width:1612.00px;height:28.78px;background:#fdfdff;"></div>
<div class="r" style="left:264.00px;top:457.92px;width:1612.00px;height:1.00px;background:#e7e8ee;"></div>
<div class="t" style="left:275.00px;top:435.00px;font-size:10.4px;line-height:17px;color:#2a7d70;transform:scaleX(0.7953);transform-origin:0 50%;">#0300</div>
<div class="t" style="left:301.00px;top:434.00px;font-size:11px;line-height:18px;color:#8c4e1c;transform:scaleX(0.9310);transform-origin:0 50%;">Général Café-Chicorée-Thé</div>
<div class="t" style="left:673.00px;top:434.00px;font-size:11px;line-height:18px;color:#3b4150;transform:scaleX(0.9265);transform-origin:0 50%;">FICHE 524 L`or cap bio intensity 7</div>
<div class="t" style="left:874.00px;top:434.00px;font-size:11px;line-height:18px;color:#8e2436;transform:scaleX(0.9400);transform-origin:0 50%;">312514</div>
<svg class="r" style="left:946.00px;top:437.93px;" width="12" height="10" viewBox="0 0 12 10"><rect x="0.3" y="0" width="1.8" height="9.5" fill="#8e2436"/><rect x="3.9" y="0" width="1.5" height="9.5" fill="#8e2436"/><rect x="6.2" y="0" width="1.4" height="9.5" fill="#8e2436"/><rect x="9.1" y="0" width="2.2" height="9.5" fill="#8e2436"/></svg>
<svg class="r" style="left:962.30px;top:437.23px;" width="12" height="10" viewBox="0 0 12 10"><path d="M0 1.7 H11 M0 5 H11 M0 8.2 H11" stroke="#8e2436" stroke-width="1"/><path d="M4 0 V3.4 M7 3.3 V6.7 M4 6.5 V9.9" stroke="#8e2436" stroke-width="1.4"/></svg>
<svg class="r" style="left:977.50px;top:436.23px;" width="13" height="12" viewBox="0 0 13 12"><path d="M2.7 2.6 A5.1 5.1 0 1 1 1.6 7.2" fill="none" stroke="#8e2436" stroke-width="1.1"/><path d="M0.8 0.8 L3.3 3.2 L0.9 3.9 Z" fill="#8e2436" stroke="#8e2436" stroke-width="0.6"/><path d="M5 3.8 L7.6 6.8" fill="none" stroke="#8e2436" stroke-width="1.1"/></svg>
<div class="t" style="left:1047.30px;top:434.00px;font-size:11px;line-height:18px;color:#3b4150;transform:scaleX(0.9400);transform-origin:0 50%;">57</div>
<div class="t" style="left:1060.80px;top:437.00px;font-size:9px;line-height:14px;color:#56a07f;transform:scaleX(0.9468);transform-origin:0 50%;-webkit-text-stroke:0.15px #56a07f;">kg</div>
<div class="t" style="left:1159.00px;top:434.00px;font-size:11px;line-height:18px;color:#3b4150;transform:scaleX(0.9400);transform-origin:0 50%;">52</div>
<div class="t" style="left:1172.30px;top:437.00px;font-size:9px;line-height:14px;color:#56a07f;-webkit-text-stroke:0.15px #56a07f;">g</div>
<div class="t" style="left:1273.75px;top:434.00px;font-size:11px;line-height:18px;color:#3b4150;transform:scaleX(0.9400);transform-origin:0 50%;">109</div>
<div class="t" style="left:1346.50px;top:434.00px;font-size:11px;line-height:18px;color:#3b4150;transform:scaleX(0.9400);transform-origin:0 50%;">1090</div>
<div class="t" style="left:1391.50px;top:434.00px;font-size:11px;line-height:18px;color:#3b4150;transform:scaleX(0.8913);transform-origin:0 50%;">34B</div>
<div class="t" style="left:1785.80px;top:434.00px;font-size:11px;line-height:18px;color:#3b4150;transform:scaleX(0.8811);transform-origin:0 50%;">LFBBA-263045</div>
<div class="r" style="left:264.00px;top:458.92px;width:1612.00px;height:28.78px;background:#f7f8fc;"></div>
<div class="r" style="left:264.00px;top:487.70px;width:1612.00px;height:1.00px;background:#e7e8ee;"></div>
<div class="t" style="left:275.00px;top:465.00px;font-size:10.4px;line-height:17px;color:#2a7d70;transform:scaleX(0.7953);transform-origin:0 50%;">#0316</div>
<div class="t" style="left:301.00px;top:464.00px;font-size:11px;line-height:18px;color:#8c4e1c;transform:scaleX(0.9014);transform-origin:0 50%;">Thé FSE+ 2025</div>
<div class="t" style="left:874.00px;top:464.00px;font-size:11px;line-height:18px;color:#8e2436;transform:scaleX(0.9400);transform-origin:0 50%;">335015</div>
<svg class="r" style="left:946.00px;top:467.71px;" width="12" height="10" viewBox="0 0 12 10"><rect x="0.3" y="0" width="1.8" height="9.5" fill="#8e2436"/><rect x="3.9" y="0" width="1.5" height="9.5" fill="#8e2436"/><rect x="6.2" y="0" width="1.4" height="9.5" fill="#8e2436"/><rect x="9.1" y="0" width="2.2" height="9.5" fill="#8e2436"/></svg>
<svg class="r" style="left:962.30px;top:467.01px;" width="12" height="10" viewBox="0 0 12 10"><path d="M0 1.7 H11 M0 5 H11 M0 8.2 H11" stroke="#8e2436" stroke-width="1"/><path d="M4 0 V3.4 M7 3.3 V6.7 M4 6.5 V9.9" stroke="#8e2436" stroke-width="1.4"/></svg>
<svg class="r" style="left:977.50px;top:466.01px;" width="13" height="12" viewBox="0 0 13 12"><path d="M2.7 2.6 A5.1 5.1 0 1 1 1.6 7.2" fill="none" stroke="#8e2436" stroke-width="1.1"/><path d="M0.8 0.8 L3.3 3.2 L0.9 3.9 Z" fill="#8e2436" stroke="#8e2436" stroke-width="0.6"/><path d="M5 3.8 L7.6 6.8" fill="none" stroke="#8e2436" stroke-width="1.1"/></svg>
<div class="t" style="left:1047.30px;top:464.00px;font-size:11px;line-height:18px;color:#3b4150;transform:scaleX(0.9400);transform-origin:0 50%;">24</div>
<div class="t" style="left:1060.80px;top:467.00px;font-size:9px;line-height:14px;color:#56a07f;transform:scaleX(0.9468);transform-origin:0 50%;-webkit-text-stroke:0.15px #56a07f;">kg</div>
<div class="t" style="left:1159.00px;top:464.00px;font-size:11px;line-height:18px;color:#3b4150;transform:scaleX(0.9400);transform-origin:0 50%;">45</div>
<div class="t" style="left:1172.30px;top:467.00px;font-size:9px;line-height:14px;color:#56a07f;-webkit-text-stroke:0.15px #56a07f;">g</div>
<div class="t" style="left:1279.50px;top:464.00px;font-size:11px;line-height:18px;color:#3b4150;transform:scaleX(0.9400);transform-origin:0 50%;">33</div>
<div class="t" style="left:1352.25px;top:464.00px;font-size:11px;line-height:18px;color:#3b4150;transform:scaleX(0.9400);transform-origin:0 50%;">528</div>
<div class="t" style="left:1580.60px;top:466.00px;font-size:10.2px;line-height:16px;color:#2a7d70;transform:scaleX(0.7299);transform-origin:0 50%;">#EUR1</div>
<div class="t" style="left:1608.20px;top:464.00px;font-size:11px;line-height:18px;color:#8c4e1c;transform:scaleX(0.9125);transform-origin:0 50%;">80X120 Euro</div>
<div class="t" style="left:1785.80px;top:464.00px;font-size:11px;line-height:18px;color:#3b4150;transform:scaleX(0.8895);transform-origin:0 50%;">LBAL-288353</div>
<div class="r" style="left:264.00px;top:488.70px;width:1612.00px;height:28.78px;background:#fdfdff;"></div>
<div class="r" style="left:264.00px;top:517.48px;width:1612.00px;height:1.00px;background:#e7e8ee;"></div>
<div class="t" style="left:275.00px;top:495.00px;font-size:10.4px;line-height:17px;color:#2a7d70;transform:scaleX(0.7953);transform-origin:0 50%;">#0316</div>
<div class="t" style="left:301.00px;top:494.00px;font-size:11px;line-height:18px;color:#8c4e1c;transform:scaleX(0.9014);transform-origin:0 50%;">Thé FSE+ 2025</div>
<div class="t" style="left:874.00px;top:494.00px;font-size:11px;line-height:18px;color:#8e2436;transform:scaleX(0.9400);transform-origin:0 50%;">337073</div>
<svg class="r" style="left:946.00px;top:497.49px;" width="12" height="10" viewBox="0 0 12 10"><rect x="0.3" y="0" width="1.8" height="9.5" fill="#8e2436"/><rect x="3.9" y="0" width="1.5" height="9.5" fill="#8e2436"/><rect x="6.2" y="0" width="1.4" height="9.5" fill="#8e2436"/><rect x="9.1" y="0" width="2.2" height="9.5" fill="#8e2436"/></svg>
<svg class="r" style="left:962.30px;top:496.79px;" width="12" height="10" viewBox="0 0 12 10"><path d="M0 1.7 H11 M0 5 H11 M0 8.2 H11" stroke="#8e2436" stroke-width="1"/><path d="M4 0 V3.4 M7 3.3 V6.7 M4 6.5 V9.9" stroke="#8e2436" stroke-width="1.4"/></svg>
<svg class="r" style="left:977.50px;top:495.79px;" width="13" height="12" viewBox="0 0 13 12"><path d="M2.7 2.6 A5.1 5.1 0 1 1 1.6 7.2" fill="none" stroke="#8e2436" stroke-width="1.1"/><path d="M0.8 0.8 L3.3 3.2 L0.9 3.9 Z" fill="#8e2436" stroke="#8e2436" stroke-width="0.6"/><path d="M5 3.8 L7.6 6.8" fill="none" stroke="#8e2436" stroke-width="1.1"/></svg>
<div class="t" style="left:1041.55px;top:494.00px;font-size:11px;line-height:18px;color:#3b4150;transform:scaleX(0.9400);transform-origin:0 50%;">138</div>
<div class="t" style="left:1060.80px;top:497.00px;font-size:9px;line-height:14px;color:#56a07f;transform:scaleX(0.9468);transform-origin:0 50%;-webkit-text-stroke:0.15px #56a07f;">kg</div>
<div class="t" style="left:1159.00px;top:494.00px;font-size:11px;line-height:18px;color:#3b4150;transform:scaleX(0.9400);transform-origin:0 50%;">45</div>
<div class="t" style="left:1172.30px;top:497.00px;font-size:9px;line-height:14px;color:#56a07f;-webkit-text-stroke:0.15px #56a07f;">g</div>
<div class="t" style="left:1273.75px;top:494.00px;font-size:11px;line-height:18px;color:#3b4150;transform:scaleX(0.9400);transform-origin:0 50%;">192</div>
<div class="t" style="left:1346.50px;top:494.00px;font-size:11px;line-height:18px;color:#3b4150;transform:scaleX(0.9400);transform-origin:0 50%;">3072</div>
<div class="t" style="left:1580.60px;top:496.00px;font-size:10.2px;line-height:16px;color:#2a7d70;transform:scaleX(0.7299);transform-origin:0 50%;">#EUR1</div>
<div class="t" style="left:1608.20px;top:494.00px;font-size:11px;line-height:18px;color:#8c4e1c;transform:scaleX(0.9125);transform-origin:0 50%;">80X120 Euro</div>
<div class="t" style="left:1785.80px;top:494.00px;font-size:11px;line-height:18px;color:#3b4150;transform:scaleX(0.8895);transform-origin:0 50%;">LBAL-290432</div>
<div class="r" style="left:264.00px;top:518.48px;width:1612.00px;height:28.78px;background:#f7f8fc;"></div>
<div class="r" style="left:264.00px;top:547.26px;width:1612.00px;height:1.00px;background:#e7e8ee;"></div>
<div class="t" style="left:275.00px;top:525.00px;font-size:10.4px;line-height:17px;color:#2a7d70;transform:scaleX(0.7953);transform-origin:0 50%;">#0317</div>
<div class="t" style="left:301.00px;top:524.00px;font-size:11px;line-height:18px;color:#8c4e1c;transform:scaleX(0.9493);transform-origin:0 50%;">Café moulu 100% arabica issu du commerce équitable FSE+ 2025</div>
<div class="t" style="left:874.00px;top:524.00px;font-size:11px;line-height:18px;color:#8e2436;transform:scaleX(0.9400);transform-origin:0 50%;">362273</div>
<svg class="r" style="left:946.00px;top:527.27px;" width="12" height="10" viewBox="0 0 12 10"><rect x="0.3" y="0" width="1.8" height="9.5" fill="#8e2436"/><rect x="3.9" y="0" width="1.5" height="9.5" fill="#8e2436"/><rect x="6.2" y="0" width="1.4" height="9.5" fill="#8e2436"/><rect x="9.1" y="0" width="2.2" height="9.5" fill="#8e2436"/></svg>
<svg class="r" style="left:962.30px;top:526.57px;" width="12" height="10" viewBox="0 0 12 10"><path d="M0 1.7 H11 M0 5 H11 M0 8.2 H11" stroke="#8e2436" stroke-width="1"/><path d="M4 0 V3.4 M7 3.3 V6.7 M4 6.5 V9.9" stroke="#8e2436" stroke-width="1.4"/></svg>
<svg class="r" style="left:977.50px;top:525.57px;" width="13" height="12" viewBox="0 0 13 12"><path d="M2.7 2.6 A5.1 5.1 0 1 1 1.6 7.2" fill="none" stroke="#8e2436" stroke-width="1.1"/><path d="M0.8 0.8 L3.3 3.2 L0.9 3.9 Z" fill="#8e2436" stroke="#8e2436" stroke-width="0.6"/><path d="M5 3.8 L7.6 6.8" fill="none" stroke="#8e2436" stroke-width="1.1"/></svg>
<div class="t" style="left:1041.55px;top:524.00px;font-size:11px;line-height:18px;color:#3b4150;transform:scaleX(0.9400);transform-origin:0 50%;">605</div>
<div class="t" style="left:1060.80px;top:527.00px;font-size:9px;line-height:14px;color:#56a07f;transform:scaleX(0.9468);transform-origin:0 50%;-webkit-text-stroke:0.15px #56a07f;">kg</div>
<div class="t" style="left:1153.25px;top:524.00px;font-size:11px;line-height:18px;color:#3b4150;transform:scaleX(0.9400);transform-origin:0 50%;">250</div>
<div class="t" style="left:1172.30px;top:527.00px;font-size:9px;line-height:14px;color:#56a07f;-webkit-text-stroke:0.15px #56a07f;">g</div>
<div class="t" style="left:1273.75px;top:524.00px;font-size:11px;line-height:18px;color:#3b4150;transform:scaleX(0.9400);transform-origin:0 50%;">121</div>
<div class="t" style="left:1346.50px;top:524.00px;font-size:11px;line-height:18px;color:#3b4150;transform:scaleX(0.9400);transform-origin:0 50%;">2420</div>
<div class="t" style="left:1580.60px;top:526.00px;font-size:10.2px;line-height:16px;color:#2a7d70;transform:scaleX(0.7299);transform-origin:0 50%;">#EUR1</div>
<div class="t" style="left:1608.20px;top:524.00px;font-size:11px;line-height:18px;color:#8c4e1c;transform:scaleX(0.9125);transform-origin:0 50%;">80X120 Euro</div>
<div class="t" style="left:1785.80px;top:524.00px;font-size:11px;line-height:18px;color:#3b4150;transform:scaleX(0.8895);transform-origin:0 50%;">LBAL-318406</div>
<div class="r" style="left:264.00px;top:548.26px;width:1612.00px;height:28.78px;background:#fdfdff;"></div>
<div class="r" style="left:264.00px;top:577.04px;width:1612.00px;height:1.00px;background:#e7e8ee;"></div>
<div class="t" style="left:275.00px;top:554.00px;font-size:10.4px;line-height:17px;color:#2a7d70;transform:scaleX(0.7953);transform-origin:0 50%;">#0317</div>
<div class="t" style="left:301.00px;top:553.00px;font-size:11px;line-height:18px;color:#8c4e1c;transform:scaleX(0.9493);transform-origin:0 50%;">Café moulu 100% arabica issu du commerce équitable FSE+ 2025</div>
<div class="t" style="left:874.00px;top:553.00px;font-size:11px;line-height:18px;color:#8e2436;transform:scaleX(0.9400);transform-origin:0 50%;">362274</div>
<svg class="r" style="left:946.00px;top:557.05px;" width="12" height="10" viewBox="0 0 12 10"><rect x="0.3" y="0" width="1.8" height="9.5" fill="#8e2436"/><rect x="3.9" y="0" width="1.5" height="9.5" fill="#8e2436"/><rect x="6.2" y="0" width="1.4" height="9.5" fill="#8e2436"/><rect x="9.1" y="0" width="2.2" height="9.5" fill="#8e2436"/></svg>
<svg class="r" style="left:962.30px;top:556.35px;" width="12" height="10" viewBox="0 0 12 10"><path d="M0 1.7 H11 M0 5 H11 M0 8.2 H11" stroke="#8e2436" stroke-width="1"/><path d="M4 0 V3.4 M7 3.3 V6.7 M4 6.5 V9.9" stroke="#8e2436" stroke-width="1.4"/></svg>
<svg class="r" style="left:977.50px;top:555.35px;" width="13" height="12" viewBox="0 0 13 12"><path d="M2.7 2.6 A5.1 5.1 0 1 1 1.6 7.2" fill="none" stroke="#8e2436" stroke-width="1.1"/><path d="M0.8 0.8 L3.3 3.2 L0.9 3.9 Z" fill="#8e2436" stroke="#8e2436" stroke-width="0.6"/><path d="M5 3.8 L7.6 6.8" fill="none" stroke="#8e2436" stroke-width="1.1"/></svg>
<div class="t" style="left:1041.55px;top:553.00px;font-size:11px;line-height:18px;color:#3b4150;transform:scaleX(0.9400);transform-origin:0 50%;">605</div>
<div class="t" style="left:1060.80px;top:556.00px;font-size:9px;line-height:14px;color:#56a07f;transform:scaleX(0.9468);transform-origin:0 50%;-webkit-text-stroke:0.15px #56a07f;">kg</div>
<div class="t" style="left:1153.25px;top:553.00px;font-size:11px;line-height:18px;color:#3b4150;transform:scaleX(0.9400);transform-origin:0 50%;">250</div>
<div class="t" style="left:1172.30px;top:556.00px;font-size:9px;line-height:14px;color:#56a07f;-webkit-text-stroke:0.15px #56a07f;">g</div>
<div class="t" style="left:1273.75px;top:553.00px;font-size:11px;line-height:18px;color:#3b4150;transform:scaleX(0.9400);transform-origin:0 50%;">121</div>
<div class="t" style="left:1346.50px;top:553.00px;font-size:11px;line-height:18px;color:#3b4150;transform:scaleX(0.9400);transform-origin:0 50%;">2420</div>
<div class="t" style="left:1580.60px;top:555.00px;font-size:10.2px;line-height:16px;color:#2a7d70;transform:scaleX(0.7299);transform-origin:0 50%;">#EUR1</div>
<div class="t" style="left:1608.20px;top:553.00px;font-size:11px;line-height:18px;color:#8c4e1c;transform:scaleX(0.9125);transform-origin:0 50%;">80X120 Euro</div>
<div class="t" style="left:1785.80px;top:553.00px;font-size:11px;line-height:18px;color:#3b4150;transform:scaleX(0.8895);transform-origin:0 50%;">LBAL-318407</div>
<div class="r" style="left:264.00px;top:578.04px;width:1612.00px;height:28.78px;background:#f7f8fc;"></div>
<div class="r" style="left:264.00px;top:606.82px;width:1612.00px;height:1.00px;background:#e7e8ee;"></div>
<div class="t" style="left:275.00px;top:584.00px;font-size:10.4px;line-height:17px;color:#2a7d70;transform:scaleX(0.7953);transform-origin:0 50%;">#0317</div>
<div class="t" style="left:301.00px;top:583.00px;font-size:11px;line-height:18px;color:#8c4e1c;transform:scaleX(0.9493);transform-origin:0 50%;">Café moulu 100% arabica issu du commerce équitable FSE+ 2025</div>
<div class="t" style="left:874.00px;top:583.00px;font-size:11px;line-height:18px;color:#8e2436;transform:scaleX(0.9400);transform-origin:0 50%;">362275</div>
<svg class="r" style="left:946.00px;top:586.83px;" width="12" height="10" viewBox="0 0 12 10"><rect x="0.3" y="0" width="1.8" height="9.5" fill="#8e2436"/><rect x="3.9" y="0" width="1.5" height="9.5" fill="#8e2436"/><rect x="6.2" y="0" width="1.4" height="9.5" fill="#8e2436"/><rect x="9.1" y="0" width="2.2" height="9.5" fill="#8e2436"/></svg>
<svg class="r" style="left:962.30px;top:586.13px;" width="12" height="10" viewBox="0 0 12 10"><path d="M0 1.7 H11 M0 5 H11 M0 8.2 H11" stroke="#8e2436" stroke-width="1"/><path d="M4 0 V3.4 M7 3.3 V6.7 M4 6.5 V9.9" stroke="#8e2436" stroke-width="1.4"/></svg>
<svg class="r" style="left:977.50px;top:585.13px;" width="13" height="12" viewBox="0 0 13 12"><path d="M2.7 2.6 A5.1 5.1 0 1 1 1.6 7.2" fill="none" stroke="#8e2436" stroke-width="1.1"/><path d="M0.8 0.8 L3.3 3.2 L0.9 3.9 Z" fill="#8e2436" stroke="#8e2436" stroke-width="0.6"/><path d="M5 3.8 L7.6 6.8" fill="none" stroke="#8e2436" stroke-width="1.1"/></svg>
<div class="t" style="left:1041.55px;top:583.00px;font-size:11px;line-height:18px;color:#3b4150;transform:scaleX(0.9400);transform-origin:0 50%;">605</div>
<div class="t" style="left:1060.80px;top:586.00px;font-size:9px;line-height:14px;color:#56a07f;transform:scaleX(0.9468);transform-origin:0 50%;-webkit-text-stroke:0.15px #56a07f;">kg</div>
<div class="t" style="left:1153.25px;top:583.00px;font-size:11px;line-height:18px;color:#3b4150;transform:scaleX(0.9400);transform-origin:0 50%;">250</div>
<div class="t" style="left:1172.30px;top:586.00px;font-size:9px;line-height:14px;color:#56a07f;-webkit-text-stroke:0.15px #56a07f;">g</div>
<div class="t" style="left:1273.75px;top:583.00px;font-size:11px;line-height:18px;color:#3b4150;transform:scaleX(0.9400);transform-origin:0 50%;">121</div>
<div class="t" style="left:1346.50px;top:583.00px;font-size:11px;line-height:18px;color:#3b4150;transform:scaleX(0.9400);transform-origin:0 50%;">2420</div>
<div class="t" style="left:1580.60px;top:585.00px;font-size:10.2px;line-height:16px;color:#2a7d70;transform:scaleX(0.7299);transform-origin:0 50%;">#EUR1</div>
<div class="t" style="left:1608.20px;top:583.00px;font-size:11px;line-height:18px;color:#8c4e1c;transform:scaleX(0.9125);transform-origin:0 50%;">80X120 Euro</div>
<div class="t" style="left:1785.80px;top:583.00px;font-size:11px;line-height:18px;color:#3b4150;transform:scaleX(0.8895);transform-origin:0 50%;">LBAL-318408</div>
<div class="r" style="left:264.00px;top:607.82px;width:1612.00px;height:28.78px;background:#fdfdff;"></div>
<div class="r" style="left:264.00px;top:636.60px;width:1612.00px;height:1.00px;background:#e7e8ee;"></div>
<div class="t" style="left:275.00px;top:614.00px;font-size:10.4px;line-height:17px;color:#2a7d70;transform:scaleX(0.7953);transform-origin:0 50%;">#0317</div>
<div class="t" style="left:301.00px;top:613.00px;font-size:11px;line-height:18px;color:#8c4e1c;transform:scaleX(0.9493);transform-origin:0 50%;">Café moulu 100% arabica issu du commerce équitable FSE+ 2025</div>
<div class="t" style="left:874.00px;top:613.00px;font-size:11px;line-height:18px;color:#8e2436;transform:scaleX(0.9400);transform-origin:0 50%;">362276</div>
<svg class="r" style="left:946.00px;top:616.61px;" width="12" height="10" viewBox="0 0 12 10"><rect x="0.3" y="0" width="1.8" height="9.5" fill="#8e2436"/><rect x="3.9" y="0" width="1.5" height="9.5" fill="#8e2436"/><rect x="6.2" y="0" width="1.4" height="9.5" fill="#8e2436"/><rect x="9.1" y="0" width="2.2" height="9.5" fill="#8e2436"/></svg>
<svg class="r" style="left:962.30px;top:615.91px;" width="12" height="10" viewBox="0 0 12 10"><path d="M0 1.7 H11 M0 5 H11 M0 8.2 H11" stroke="#8e2436" stroke-width="1"/><path d="M4 0 V3.4 M7 3.3 V6.7 M4 6.5 V9.9" stroke="#8e2436" stroke-width="1.4"/></svg>
<svg class="r" style="left:977.50px;top:614.91px;" width="13" height="12" viewBox="0 0 13 12"><path d="M2.7 2.6 A5.1 5.1 0 1 1 1.6 7.2" fill="none" stroke="#8e2436" stroke-width="1.1"/><path d="M0.8 0.8 L3.3 3.2 L0.9 3.9 Z" fill="#8e2436" stroke="#8e2436" stroke-width="0.6"/><path d="M5 3.8 L7.6 6.8" fill="none" stroke="#8e2436" stroke-width="1.1"/></svg>
<div class="t" style="left:1041.55px;top:613.00px;font-size:11px;line-height:18px;color:#3b4150;transform:scaleX(0.9400);transform-origin:0 50%;">605</div>
<div class="t" style="left:1060.80px;top:616.00px;font-size:9px;line-height:14px;color:#56a07f;transform:scaleX(0.9468);transform-origin:0 50%;-webkit-text-stroke:0.15px #56a07f;">kg</div>
<div class="t" style="left:1153.25px;top:613.00px;font-size:11px;line-height:18px;color:#3b4150;transform:scaleX(0.9400);transform-origin:0 50%;">250</div>
<div class="t" style="left:1172.30px;top:616.00px;font-size:9px;line-height:14px;color:#56a07f;-webkit-text-stroke:0.15px #56a07f;">g</div>
<div class="t" style="left:1273.75px;top:613.00px;font-size:11px;line-height:18px;color:#3b4150;transform:scaleX(0.9400);transform-origin:0 50%;">121</div>
<div class="t" style="left:1346.50px;top:613.00px;font-size:11px;line-height:18px;color:#3b4150;transform:scaleX(0.9400);transform-origin:0 50%;">2420</div>
<div class="t" style="left:1580.60px;top:615.00px;font-size:10.2px;line-height:16px;color:#2a7d70;transform:scaleX(0.7299);transform-origin:0 50%;">#EUR1</div>
<div class="t" style="left:1608.20px;top:613.00px;font-size:11px;line-height:18px;color:#8c4e1c;transform:scaleX(0.9125);transform-origin:0 50%;">80X120 Euro</div>
<div class="t" style="left:1785.80px;top:613.00px;font-size:11px;line-height:18px;color:#3b4150;transform:scaleX(0.8895);transform-origin:0 50%;">LBAL-318409</div>
<div class="r" style="left:264.00px;top:637.60px;width:1612.00px;height:28.78px;background:#fcf143;"></div>
<div class="r" style="left:264.00px;top:666.38px;width:1612.00px;height:1.00px;background:#e7e8ee;"></div>
<div class="t" style="left:275.00px;top:644.00px;font-size:10.4px;line-height:17px;color:#2a7d70;transform:scaleX(0.7953);transform-origin:0 50%;">#0402</div>
<div class="t" style="left:301.00px;top:643.00px;font-size:11px;line-height:18px;color:#8c4e1c;transform:scaleX(0.9387);transform-origin:0 50%;">Céréales</div>
<div class="t" style="left:673.00px;top:643.00px;font-size:11px;line-height:18px;color:#3b4150;transform:scaleX(0.8100);transform-origin:0 50%;">CEREALES</div>
<div class="t" style="left:874.00px;top:643.00px;font-size:11px;line-height:18px;color:#8e2436;transform:scaleX(0.9400);transform-origin:0 50%;">358123</div>
<svg class="r" style="left:930.00px;top:645.49px;" width="12" height="10" viewBox="0 0 12 10"><path d="M6 0.6 L11.2 9.4 H0.8 Z" fill="none" stroke="#cdb400" stroke-width="0.9" stroke-linejoin="round"/><path d="M6 3.6 V6.4 M6 7.5 V8.3" stroke="#cdb400" stroke-width="0.9"/></svg>
<svg class="r" style="left:946.00px;top:646.39px;" width="12" height="10" viewBox="0 0 12 10"><rect x="0.3" y="0" width="1.8" height="9.5" fill="#8e2436"/><rect x="3.9" y="0" width="1.5" height="9.5" fill="#8e2436"/><rect x="6.2" y="0" width="1.4" height="9.5" fill="#8e2436"/><rect x="9.1" y="0" width="2.2" height="9.5" fill="#8e2436"/></svg>
<svg class="r" style="left:962.30px;top:645.69px;" width="12" height="10" viewBox="0 0 12 10"><path d="M0 1.7 H11 M0 5 H11 M0 8.2 H11" stroke="#8e2436" stroke-width="1"/><path d="M4 0 V3.4 M7 3.3 V6.7 M4 6.5 V9.9" stroke="#8e2436" stroke-width="1.4"/></svg>
<svg class="r" style="left:977.50px;top:644.69px;" width="13" height="12" viewBox="0 0 13 12"><path d="M2.7 2.6 A5.1 5.1 0 1 1 1.6 7.2" fill="none" stroke="#8e2436" stroke-width="1.1"/><path d="M0.8 0.8 L3.3 3.2 L0.9 3.9 Z" fill="#8e2436" stroke="#8e2436" stroke-width="0.6"/><path d="M5 3.8 L7.6 6.8" fill="none" stroke="#8e2436" stroke-width="1.1"/></svg>
<div class="t" style="left:1052.68px;top:643.00px;font-size:11px;line-height:18px;color:#3b4150;">0</div>
<div class="t" style="left:1060.80px;top:646.00px;font-size:9px;line-height:14px;color:#56a07f;transform:scaleX(0.9468);transform-origin:0 50%;-webkit-text-stroke:0.15px #56a07f;">kg</div>
<div class="t" style="left:1141.75px;top:643.00px;font-size:11px;line-height:18px;color:#3b4150;transform:scaleX(0.9400);transform-origin:0 50%;">12708</div>
<div class="t" style="left:1172.30px;top:646.00px;font-size:9px;line-height:14px;color:#56a07f;-webkit-text-stroke:0.15px #56a07f;">g</div>
<div class="t" style="left:1284.88px;top:643.00px;font-size:11px;line-height:18px;color:#3b4150;">0</div>
<div class="t" style="left:1363.38px;top:643.00px;font-size:11px;line-height:18px;color:#3b4150;">0</div>
<div class="t" style="left:1785.80px;top:643.00px;font-size:11px;line-height:18px;color:#3b4150;transform:scaleX(0.8811);transform-origin:0 50%;">LFBBA-313820</div>
<div class="r" style="left:264.00px;top:667.38px;width:1612.00px;height:28.78px;background:#fdfdff;"></div>
<div class="r" style="left:264.00px;top:696.16px;width:1612.00px;height:1.00px;background:#e7e8ee;"></div>
<div class="t" style="left:275.00px;top:673.00px;font-size:10.4px;line-height:17px;color:#2a7d70;transform:scaleX(0.7953);transform-origin:0 50%;">#0402</div>
<div class="t" style="left:301.00px;top:672.00px;font-size:11px;line-height:18px;color:#8c4e1c;transform:scaleX(0.9387);transform-origin:0 50%;">Céréales</div>
<div class="t" style="left:673.00px;top:672.00px;font-size:11px;line-height:18px;color:#3b4150;transform:scaleX(0.8100);transform-origin:0 50%;">CEREALES</div>
<div class="t" style="left:874.00px;top:672.00px;font-size:11px;line-height:18px;color:#8e2436;transform:scaleX(0.9400);transform-origin:0 50%;">358730</div>
<svg class="r" style="left:946.00px;top:676.17px;" width="12" height="10" viewBox="0 0 12 10"><rect x="0.3" y="0" width="1.8" height="9.5" fill="#8e2436"/><rect x="3.9" y="0" width="1.5" height="9.5" fill="#8e2436"/><rect x="6.2" y="0" width="1.4" height="9.5" fill="#8e2436"/><rect x="9.1" y="0" width="2.2" height="9.5" fill="#8e2436"/></svg>
<svg class="r" style="left:962.30px;top:675.47px;" width="12" height="10" viewBox="0 0 12 10"><path d="M0 1.7 H11 M0 5 H11 M0 8.2 H11" stroke="#8e2436" stroke-width="1"/><path d="M4 0 V3.4 M7 3.3 V6.7 M4 6.5 V9.9" stroke="#8e2436" stroke-width="1.4"/></svg>
<svg class="r" style="left:977.50px;top:674.47px;" width="13" height="12" viewBox="0 0 13 12"><path d="M2.7 2.6 A5.1 5.1 0 1 1 1.6 7.2" fill="none" stroke="#8e2436" stroke-width="1.1"/><path d="M0.8 0.8 L3.3 3.2 L0.9 3.9 Z" fill="#8e2436" stroke="#8e2436" stroke-width="0.6"/><path d="M5 3.8 L7.6 6.8" fill="none" stroke="#8e2436" stroke-width="1.1"/></svg>
<div class="t" style="left:1041.55px;top:672.00px;font-size:11px;line-height:18px;color:#3b4150;transform:scaleX(0.9400);transform-origin:0 50%;">323</div>
<div class="t" style="left:1060.80px;top:675.00px;font-size:9px;line-height:14px;color:#56a07f;transform:scaleX(0.9468);transform-origin:0 50%;-webkit-text-stroke:0.15px #56a07f;">kg</div>
<div class="t" style="left:1785.80px;top:672.00px;font-size:11px;line-height:18px;color:#3b4150;transform:scaleX(0.8811);transform-origin:0 50%;">LFBBA-314538</div>
<div class="r" style="left:264.00px;top:697.16px;width:1612.00px;height:28.78px;background:#fcf143;"></div>
<div class="r" style="left:264.00px;top:725.94px;width:1612.00px;height:1.00px;background:#e7e8ee;"></div>
<div class="t" style="left:275.00px;top:703.00px;font-size:10.4px;line-height:17px;color:#2a7d70;transform:scaleX(0.7953);transform-origin:0 50%;">#0402</div>
<div class="t" style="left:301.00px;top:702.00px;font-size:11px;line-height:18px;color:#8c4e1c;transform:scaleX(0.9387);transform-origin:0 50%;">Céréales</div>
<div class="t" style="left:673.00px;top:702.00px;font-size:11px;line-height:18px;color:#3b4150;transform:scaleX(0.8100);transform-origin:0 50%;">CEREALES</div>
<div class="t" style="left:874.00px;top:702.00px;font-size:11px;line-height:18px;color:#8e2436;transform:scaleX(0.9400);transform-origin:0 50%;">357476</div>
<svg class="r" style="left:930.00px;top:705.05px;" width="12" height="10" viewBox="0 0 12 10"><path d="M6 0.6 L11.2 9.4 H0.8 Z" fill="none" stroke="#cdb400" stroke-width="0.9" stroke-linejoin="round"/><path d="M6 3.6 V6.4 M6 7.5 V8.3" stroke="#cdb400" stroke-width="0.9"/></svg>
<svg class="r" style="left:946.00px;top:705.95px;" width="12" height="10" viewBox="0 0 12 10"><rect x="0.3" y="0" width="1.8" height="9.5" fill="#8e2436"/><rect x="3.9" y="0" width="1.5" height="9.5" fill="#8e2436"/><rect x="6.2" y="0" width="1.4" height="9.5" fill="#8e2436"/><rect x="9.1" y="0" width="2.2" height="9.5" fill="#8e2436"/></svg>
<svg class="r" style="left:962.30px;top:705.25px;" width="12" height="10" viewBox="0 0 12 10"><path d="M0 1.7 H11 M0 5 H11 M0 8.2 H11" stroke="#8e2436" stroke-width="1"/><path d="M4 0 V3.4 M7 3.3 V6.7 M4 6.5 V9.9" stroke="#8e2436" stroke-width="1.4"/></svg>
<svg class="r" style="left:977.50px;top:704.25px;" width="13" height="12" viewBox="0 0 13 12"><path d="M2.7 2.6 A5.1 5.1 0 1 1 1.6 7.2" fill="none" stroke="#8e2436" stroke-width="1.1"/><path d="M0.8 0.8 L3.3 3.2 L0.9 3.9 Z" fill="#8e2436" stroke="#8e2436" stroke-width="0.6"/><path d="M5 3.8 L7.6 6.8" fill="none" stroke="#8e2436" stroke-width="1.1"/></svg>
<div class="t" style="left:1052.68px;top:702.00px;font-size:11px;line-height:18px;color:#3b4150;">0</div>
<div class="t" style="left:1060.80px;top:705.00px;font-size:9px;line-height:14px;color:#56a07f;transform:scaleX(0.9468);transform-origin:0 50%;-webkit-text-stroke:0.15px #56a07f;">kg</div>
<div class="t" style="left:1141.75px;top:702.00px;font-size:11px;line-height:18px;color:#3b4150;transform:scaleX(0.9400);transform-origin:0 50%;">13533</div>
<div class="t" style="left:1172.30px;top:705.00px;font-size:9px;line-height:14px;color:#56a07f;-webkit-text-stroke:0.15px #56a07f;">g</div>
<div class="t" style="left:1284.88px;top:702.00px;font-size:11px;line-height:18px;color:#3b4150;">0</div>
<div class="t" style="left:1363.38px;top:702.00px;font-size:11px;line-height:18px;color:#3b4150;">0</div>
<div class="t" style="left:1785.80px;top:702.00px;font-size:11px;line-height:18px;color:#3b4150;transform:scaleX(0.8811);transform-origin:0 50%;">LFBBA-313083</div>
<div class="r" style="left:264.00px;top:726.94px;width:1612.00px;height:28.78px;background:#fdfdff;"></div>
<div class="r" style="left:264.00px;top:755.72px;width:1612.00px;height:1.00px;background:#e7e8ee;"></div>
<div class="t" style="left:275.00px;top:733.00px;font-size:10.4px;line-height:17px;color:#2a7d70;transform:scaleX(0.7953);transform-origin:0 50%;">#0402</div>
<div class="t" style="left:301.00px;top:732.00px;font-size:11px;line-height:18px;color:#8c4e1c;transform:scaleX(0.9387);transform-origin:0 50%;">Céréales</div>
<div class="t" style="left:673.00px;top:732.00px;font-size:11px;line-height:18px;color:#3b4150;transform:scaleX(0.8100);transform-origin:0 50%;">CEREALES</div>
<div class="t" style="left:874.00px;top:732.00px;font-size:11px;line-height:18px;color:#8e2436;transform:scaleX(0.9400);transform-origin:0 50%;">358729</div>
<svg class="r" style="left:946.00px;top:735.73px;" width="12" height="10" viewBox="0 0 12 10"><rect x="0.3" y="0" width="1.8" height="9.5" fill="#8e2436"/><rect x="3.9" y="0" width="1.5" height="9.5" fill="#8e2436"/><rect x="6.2" y="0" width="1.4" height="9.5" fill="#8e2436"/><rect x="9.1" y="0" width="2.2" height="9.5" fill="#8e2436"/></svg>
<svg class="r" style="left:962.30px;top:735.03px;" width="12" height="10" viewBox="0 0 12 10"><path d="M0 1.7 H11 M0 5 H11 M0 8.2 H11" stroke="#8e2436" stroke-width="1"/><path d="M4 0 V3.4 M7 3.3 V6.7 M4 6.5 V9.9" stroke="#8e2436" stroke-width="1.4"/></svg>
<svg class="r" style="left:977.50px;top:734.03px;" width="13" height="12" viewBox="0 0 13 12"><path d="M2.7 2.6 A5.1 5.1 0 1 1 1.6 7.2" fill="none" stroke="#8e2436" stroke-width="1.1"/><path d="M0.8 0.8 L3.3 3.2 L0.9 3.9 Z" fill="#8e2436" stroke="#8e2436" stroke-width="0.6"/><path d="M5 3.8 L7.6 6.8" fill="none" stroke="#8e2436" stroke-width="1.1"/></svg>
<div class="t" style="left:1041.55px;top:732.00px;font-size:11px;line-height:18px;color:#3b4150;transform:scaleX(0.9400);transform-origin:0 50%;">330</div>
<div class="t" style="left:1060.80px;top:735.00px;font-size:9px;line-height:14px;color:#56a07f;transform:scaleX(0.9468);transform-origin:0 50%;-webkit-text-stroke:0.15px #56a07f;">kg</div>
<div class="t" style="left:1785.80px;top:732.00px;font-size:11px;line-height:18px;color:#3b4150;transform:scaleX(0.8811);transform-origin:0 50%;">LFBBA-314537</div>
<div class="r" style="left:264.00px;top:756.72px;width:1612.00px;height:28.78px;background:#f7f8fc;"></div>
<div class="r" style="left:264.00px;top:785.50px;width:1612.00px;height:1.00px;background:#e7e8ee;"></div>
<div class="t" style="left:275.00px;top:763.00px;font-size:10.4px;line-height:17px;color:#2a7d70;transform:scaleX(0.7953);transform-origin:0 50%;">#0402</div>
<div class="t" style="left:301.00px;top:762.00px;font-size:11px;line-height:18px;color:#8c4e1c;transform:scaleX(0.9387);transform-origin:0 50%;">Céréales</div>
<div class="t" style="left:673.00px;top:762.00px;font-size:11px;line-height:18px;color:#3b4150;transform:scaleX(0.8298);transform-origin:0 50%;">CEREALES 23 SACHETS</div>
<div class="t" style="left:874.00px;top:762.00px;font-size:11px;line-height:18px;color:#8e2436;transform:scaleX(0.9400);transform-origin:0 50%;">356644</div>
<svg class="r" style="left:946.00px;top:765.51px;" width="12" height="10" viewBox="0 0 12 10"><rect x="0.3" y="0" width="1.8" height="9.5" fill="#8e2436"/><rect x="3.9" y="0" width="1.5" height="9.5" fill="#8e2436"/><rect x="6.2" y="0" width="1.4" height="9.5" fill="#8e2436"/><rect x="9.1" y="0" width="2.2" height="9.5" fill="#8e2436"/></svg>
<svg class="r" style="left:962.30px;top:764.81px;" width="12" height="10" viewBox="0 0 12 10"><path d="M0 1.7 H11 M0 5 H11 M0 8.2 H11" stroke="#8e2436" stroke-width="1"/><path d="M4 0 V3.4 M7 3.3 V6.7 M4 6.5 V9.9" stroke="#8e2436" stroke-width="1.4"/></svg>
<svg class="r" style="left:977.50px;top:763.81px;" width="13" height="12" viewBox="0 0 13 12"><path d="M2.7 2.6 A5.1 5.1 0 1 1 1.6 7.2" fill="none" stroke="#8e2436" stroke-width="1.1"/><path d="M0.8 0.8 L3.3 3.2 L0.9 3.9 Z" fill="#8e2436" stroke="#8e2436" stroke-width="0.6"/><path d="M5 3.8 L7.6 6.8" fill="none" stroke="#8e2436" stroke-width="1.1"/></svg>
<div class="t" style="left:1041.55px;top:762.00px;font-size:11px;line-height:18px;color:#3b4150;transform:scaleX(0.9400);transform-origin:0 50%;">101</div>
<div class="t" style="left:1060.80px;top:765.00px;font-size:9px;line-height:14px;color:#56a07f;transform:scaleX(0.9468);transform-origin:0 50%;-webkit-text-stroke:0.15px #56a07f;">kg</div>
<div class="t" style="left:1391.50px;top:762.00px;font-size:11px;line-height:18px;color:#3b4150;transform:scaleX(0.9029);transform-origin:0 50%;">102B</div>
<div class="t" style="left:1785.80px;top:762.00px;font-size:11px;line-height:18px;color:#3b4150;transform:scaleX(0.8811);transform-origin:0 50%;">LFBBA-312121</div>
<div class="r" style="left:264.00px;top:786.50px;width:1612.00px;height:28.78px;background:#fdfdff;"></div>
<div class="r" style="left:264.00px;top:815.28px;width:1612.00px;height:1.00px;background:#e7e8ee;"></div>
<div class="t" style="left:275.00px;top:793.00px;font-size:10.4px;line-height:17px;color:#2a7d70;transform:scaleX(0.7953);transform-origin:0 50%;">#0402</div>
<div class="t" style="left:301.00px;top:792.00px;font-size:11px;line-height:18px;color:#8c4e1c;transform:scaleX(0.9387);transform-origin:0 50%;">Céréales</div>
<div class="t" style="left:673.00px;top:792.00px;font-size:11px;line-height:18px;color:#3b4150;transform:scaleX(0.8298);transform-origin:0 50%;">CEREALES 24 SACHETS</div>
<div class="t" style="left:874.00px;top:792.00px;font-size:11px;line-height:18px;color:#8e2436;transform:scaleX(0.9400);transform-origin:0 50%;">356647</div>
<svg class="r" style="left:946.00px;top:795.29px;" width="12" height="10" viewBox="0 0 12 10"><rect x="0.3" y="0" width="1.8" height="9.5" fill="#8e2436"/><rect x="3.9" y="0" width="1.5" height="9.5" fill="#8e2436"/><rect x="6.2" y="0" width="1.4" height="9.5" fill="#8e2436"/><rect x="9.1" y="0" width="2.2" height="9.5" fill="#8e2436"/></svg>
<svg class="r" style="left:962.30px;top:794.59px;" width="12" height="10" viewBox="0 0 12 10"><path d="M0 1.7 H11 M0 5 H11 M0 8.2 H11" stroke="#8e2436" stroke-width="1"/><path d="M4 0 V3.4 M7 3.3 V6.7 M4 6.5 V9.9" stroke="#8e2436" stroke-width="1.4"/></svg>
<svg class="r" style="left:977.50px;top:793.59px;" width="13" height="12" viewBox="0 0 13 12"><path d="M2.7 2.6 A5.1 5.1 0 1 1 1.6 7.2" fill="none" stroke="#8e2436" stroke-width="1.1"/><path d="M0.8 0.8 L3.3 3.2 L0.9 3.9 Z" fill="#8e2436" stroke="#8e2436" stroke-width="0.6"/><path d="M5 3.8 L7.6 6.8" fill="none" stroke="#8e2436" stroke-width="1.1"/></svg>
<div class="t" style="left:1041.55px;top:792.00px;font-size:11px;line-height:18px;color:#3b4150;transform:scaleX(0.9400);transform-origin:0 50%;">137</div>
<div class="t" style="left:1060.80px;top:795.00px;font-size:9px;line-height:14px;color:#56a07f;transform:scaleX(0.9468);transform-origin:0 50%;-webkit-text-stroke:0.15px #56a07f;">kg</div>
<div class="t" style="left:1391.50px;top:792.00px;font-size:11px;line-height:18px;color:#3b4150;transform:scaleX(0.9029);transform-origin:0 50%;">100B</div>
<div class="t" style="left:1785.80px;top:792.00px;font-size:11px;line-height:18px;color:#3b4150;transform:scaleX(0.8811);transform-origin:0 50%;">LFBBA-312124</div>
<div class="r" style="left:264.00px;top:816.28px;width:1612.00px;height:28.78px;background:#f7f8fc;"></div>
<div class="r" style="left:264.00px;top:845.06px;width:1612.00px;height:1.00px;background:#e7e8ee;"></div>
<div class="t" style="left:275.00px;top:822.00px;font-size:10.4px;line-height:17px;color:#2a7d70;transform:scaleX(0.7953);transform-origin:0 50%;">#0402</div>
<div class="t" style="left:301.00px;top:821.00px;font-size:11px;line-height:18px;color:#8c4e1c;transform:scaleX(0.9387);transform-origin:0 50%;">Céréales</div>
<div class="t" style="left:673.00px;top:821.00px;font-size:11px;line-height:18px;color:#3b4150;transform:scaleX(0.8298);transform-origin:0 50%;">CEREALES 24 SACHETS</div>
<div class="t" style="left:874.00px;top:821.00px;font-size:11px;line-height:18px;color:#8e2436;transform:scaleX(0.9400);transform-origin:0 50%;">356649</div>
<svg class="r" style="left:946.00px;top:825.07px;" width="12" height="10" viewBox="0 0 12 10"><rect x="0.3" y="0" width="1.8" height="9.5" fill="#8e2436"/><rect x="3.9" y="0" width="1.5" height="9.5" fill="#8e2436"/><rect x="6.2" y="0" width="1.4" height="9.5" fill="#8e2436"/><rect x="9.1" y="0" width="2.2" height="9.5" fill="#8e2436"/></svg>
<svg class="r" style="left:962.30px;top:824.37px;" width="12" height="10" viewBox="0 0 12 10"><path d="M0 1.7 H11 M0 5 H11 M0 8.2 H11" stroke="#8e2436" stroke-width="1"/><path d="M4 0 V3.4 M7 3.3 V6.7 M4 6.5 V9.9" stroke="#8e2436" stroke-width="1.4"/></svg>
<svg class="r" style="left:977.50px;top:823.37px;" width="13" height="12" viewBox="0 0 13 12"><path d="M2.7 2.6 A5.1 5.1 0 1 1 1.6 7.2" fill="none" stroke="#8e2436" stroke-width="1.1"/><path d="M0.8 0.8 L3.3 3.2 L0.9 3.9 Z" fill="#8e2436" stroke="#8e2436" stroke-width="0.6"/><path d="M5 3.8 L7.6 6.8" fill="none" stroke="#8e2436" stroke-width="1.1"/></svg>
<div class="t" style="left:1047.30px;top:821.00px;font-size:11px;line-height:18px;color:#3b4150;transform:scaleX(0.9400);transform-origin:0 50%;">88</div>
<div class="t" style="left:1060.80px;top:824.00px;font-size:9px;line-height:14px;color:#56a07f;transform:scaleX(0.9468);transform-origin:0 50%;-webkit-text-stroke:0.15px #56a07f;">kg</div>
<div class="t" style="left:1391.50px;top:821.00px;font-size:11px;line-height:18px;color:#3b4150;transform:scaleX(0.9029);transform-origin:0 50%;">101B</div>
<div class="t" style="left:1785.80px;top:821.00px;font-size:11px;line-height:18px;color:#3b4150;transform:scaleX(0.8811);transform-origin:0 50%;">LFBBA-312126</div>
<div class="r" style="left:264.00px;top:846.06px;width:1612.00px;height:28.78px;background:#fdfdff;"></div>
<div class="r" style="left:264.00px;top:874.84px;width:1612.00px;height:1.00px;background:#e7e8ee;"></div>
<div class="t" style="left:275.00px;top:852.00px;font-size:10.4px;line-height:17px;color:#2a7d70;transform:scaleX(0.7953);transform-origin:0 50%;">#0402</div>
<div class="t" style="left:301.00px;top:851.00px;font-size:11px;line-height:18px;color:#8c4e1c;transform:scaleX(0.9387);transform-origin:0 50%;">Céréales</div>
<div class="t" style="left:673.00px;top:851.00px;font-size:11px;line-height:18px;color:#3b4150;transform:scaleX(0.8152);transform-origin:0 50%;">CEREALES VRAC</div>
<div class="t" style="left:874.00px;top:851.00px;font-size:11px;line-height:18px;color:#8e2436;transform:scaleX(0.9400);transform-origin:0 50%;">356648</div>
<svg class="r" style="left:946.00px;top:854.85px;" width="12" height="10" viewBox="0 0 12 10"><rect x="0.3" y="0" width="1.8" height="9.5" fill="#8e2436"/><rect x="3.9" y="0" width="1.5" height="9.5" fill="#8e2436"/><rect x="6.2" y="0" width="1.4" height="9.5" fill="#8e2436"/><rect x="9.1" y="0" width="2.2" height="9.5" fill="#8e2436"/></svg>
<svg class="r" style="left:962.30px;top:854.15px;" width="12" height="10" viewBox="0 0 12 10"><path d="M0 1.7 H11 M0 5 H11 M0 8.2 H11" stroke="#8e2436" stroke-width="1"/><path d="M4 0 V3.4 M7 3.3 V6.7 M4 6.5 V9.9" stroke="#8e2436" stroke-width="1.4"/></svg>
<svg class="r" style="left:977.50px;top:853.15px;" width="13" height="12" viewBox="0 0 13 12"><path d="M2.7 2.6 A5.1 5.1 0 1 1 1.6 7.2" fill="none" stroke="#8e2436" stroke-width="1.1"/><path d="M0.8 0.8 L3.3 3.2 L0.9 3.9 Z" fill="#8e2436" stroke="#8e2436" stroke-width="0.6"/><path d="M5 3.8 L7.6 6.8" fill="none" stroke="#8e2436" stroke-width="1.1"/></svg>
<div class="t" style="left:1041.55px;top:851.00px;font-size:11px;line-height:18px;color:#3b4150;transform:scaleX(0.9400);transform-origin:0 50%;">208</div>
<div class="t" style="left:1060.80px;top:854.00px;font-size:9px;line-height:14px;color:#56a07f;transform:scaleX(0.9468);transform-origin:0 50%;-webkit-text-stroke:0.15px #56a07f;">kg</div>
<div class="t" style="left:1391.50px;top:851.00px;font-size:11px;line-height:18px;color:#3b4150;transform:scaleX(0.9325);transform-origin:0 50%;">110A</div>
<div class="t" style="left:1785.80px;top:851.00px;font-size:11px;line-height:18px;color:#3b4150;transform:scaleX(0.8811);transform-origin:0 50%;">LFBBA-312125</div>
<div class="r" style="left:264.00px;top:875.84px;width:1612.00px;height:28.78px;background:#f7f8fc;"></div>
<div class="r" style="left:264.00px;top:904.62px;width:1612.00px;height:1.00px;background:#e7e8ee;"></div>
<div class="t" style="left:275.00px;top:882.00px;font-size:10.4px;line-height:17px;color:#2a7d70;transform:scaleX(0.7953);transform-origin:0 50%;">#0402</div>
<div class="t" style="left:301.00px;top:881.00px;font-size:11px;line-height:18px;color:#8c4e1c;transform:scaleX(0.9387);transform-origin:0 50%;">Céréales</div>
<div class="t" style="left:673.00px;top:881.00px;font-size:11px;line-height:18px;color:#3b4150;transform:scaleX(0.8152);transform-origin:0 50%;">CEREALES VRAC</div>
<div class="t" style="left:874.00px;top:881.00px;font-size:11px;line-height:18px;color:#8e2436;letter-spacing:-0.277px;">356411</div>
<svg class="r" style="left:946.00px;top:884.63px;" width="12" height="10" viewBox="0 0 12 10"><rect x="0.3" y="0" width="1.8" height="9.5" fill="#8e2436"/><rect x="3.9" y="0" width="1.5" height="9.5" fill="#8e2436"/><rect x="6.2" y="0" width="1.4" height="9.5" fill="#8e2436"/><rect x="9.1" y="0" width="2.2" height="9.5" fill="#8e2436"/></svg>
<svg class="r" style="left:962.30px;top:883.93px;" width="12" height="10" viewBox="0 0 12 10"><path d="M0 1.7 H11 M0 5 H11 M0 8.2 H11" stroke="#8e2436" stroke-width="1"/><path d="M4 0 V3.4 M7 3.3 V6.7 M4 6.5 V9.9" stroke="#8e2436" stroke-width="1.4"/></svg>
<svg class="r" style="left:977.50px;top:882.93px;" width="13" height="12" viewBox="0 0 13 12"><path d="M2.7 2.6 A5.1 5.1 0 1 1 1.6 7.2" fill="none" stroke="#8e2436" stroke-width="1.1"/><path d="M0.8 0.8 L3.3 3.2 L0.9 3.9 Z" fill="#8e2436" stroke="#8e2436" stroke-width="0.6"/><path d="M5 3.8 L7.6 6.8" fill="none" stroke="#8e2436" stroke-width="1.1"/></svg>
<div class="t" style="left:1041.55px;top:881.00px;font-size:11px;line-height:18px;color:#3b4150;transform:scaleX(0.9400);transform-origin:0 50%;">103</div>
<div class="t" style="left:1060.80px;top:884.00px;font-size:9px;line-height:14px;color:#56a07f;transform:scaleX(0.9468);transform-origin:0 50%;-webkit-text-stroke:0.15px #56a07f;">kg</div>
<div class="t" style="left:1391.50px;top:881.00px;font-size:11px;line-height:18px;color:#3b4150;transform:scaleX(0.9029);transform-origin:0 50%;">108A</div>
<div class="t" style="left:1785.80px;top:881.00px;font-size:11px;line-height:18px;color:#3b4150;transform:scaleX(0.8908);transform-origin:0 50%;">LFBBA-311814</div>
<div class="r" style="left:264.00px;top:905.62px;width:1612.00px;height:28.78px;background:#fdfdff;"></div>
<div class="r" style="left:264.00px;top:934.40px;width:1612.00px;height:1.00px;background:#e7e8ee;"></div>
<div class="t" style="left:275.00px;top:912.00px;font-size:10.4px;line-height:17px;color:#2a7d70;transform:scaleX(0.7953);transform-origin:0 50%;">#0402</div>
<div class="t" style="left:301.00px;top:911.00px;font-size:11px;line-height:18px;color:#8c4e1c;transform:scaleX(0.9387);transform-origin:0 50%;">Céréales</div>
<div class="t" style="left:673.00px;top:911.00px;font-size:11px;line-height:18px;color:#3b4150;transform:scaleX(0.8152);transform-origin:0 50%;">CEREALES VRAC</div>
<div class="t" style="left:874.00px;top:911.00px;font-size:11px;line-height:18px;color:#8e2436;transform:scaleX(0.9400);transform-origin:0 50%;">358122</div>
<svg class="r" style="left:946.00px;top:914.41px;" width="12" height="10" viewBox="0 0 12 10"><rect x="0.3" y="0" width="1.8" height="9.5" fill="#8e2436"/><rect x="3.9" y="0" width="1.5" height="9.5" fill="#8e2436"/><rect x="6.2" y="0" width="1.4" height="9.5" fill="#8e2436"/><rect x="9.1" y="0" width="2.2" height="9.5" fill="#8e2436"/></svg>
<svg class="r" style="left:962.30px;top:913.71px;" width="12" height="10" viewBox="0 0 12 10"><path d="M0 1.7 H11 M0 5 H11 M0 8.2 H11" stroke="#8e2436" stroke-width="1"/><path d="M4 0 V3.4 M7 3.3 V6.7 M4 6.5 V9.9" stroke="#8e2436" stroke-width="1.4"/></svg>
<svg class="r" style="left:977.50px;top:912.71px;" width="13" height="12" viewBox="0 0 13 12"><path d="M2.7 2.6 A5.1 5.1 0 1 1 1.6 7.2" fill="none" stroke="#8e2436" stroke-width="1.1"/><path d="M0.8 0.8 L3.3 3.2 L0.9 3.9 Z" fill="#8e2436" stroke="#8e2436" stroke-width="0.6"/><path d="M5 3.8 L7.6 6.8" fill="none" stroke="#8e2436" stroke-width="1.1"/></svg>
<div class="t" style="left:1041.55px;top:911.00px;font-size:11px;line-height:18px;color:#3b4150;transform:scaleX(0.9400);transform-origin:0 50%;">250</div>
<div class="t" style="left:1060.80px;top:914.00px;font-size:9px;line-height:14px;color:#56a07f;transform:scaleX(0.9468);transform-origin:0 50%;-webkit-text-stroke:0.15px #56a07f;">kg</div>
<div class="t" style="left:1391.50px;top:911.00px;font-size:11px;line-height:18px;color:#3b4150;transform:scaleX(0.9029);transform-origin:0 50%;">136A</div>
<div class="t" style="left:1785.80px;top:911.00px;font-size:11px;line-height:18px;color:#3b4150;transform:scaleX(0.8811);transform-origin:0 50%;">LFBBA-313819</div>
<div class="r" style="left:264.00px;top:935.40px;width:1612.00px;height:28.78px;background:#f7f8fc;"></div>
<div class="r" style="left:264.00px;top:964.18px;width:1612.00px;height:1.00px;background:#e7e8ee;"></div>
<div class="t" style="left:275.00px;top:941.00px;font-size:10.4px;line-height:17px;color:#2a7d70;transform:scaleX(0.7953);transform-origin:0 50%;">#0402</div>
<div class="t" style="left:301.00px;top:940.00px;font-size:11px;line-height:18px;color:#8c4e1c;transform:scaleX(0.9387);transform-origin:0 50%;">Céréales</div>
<div class="t" style="left:673.00px;top:940.00px;font-size:11px;line-height:18px;color:#3b4150;transform:scaleX(0.8424);transform-origin:0 50%;">FICHE 475 KELLOGG`S</div>
<div class="t" style="left:874.00px;top:940.00px;font-size:11px;line-height:18px;color:#8e2436;transform:scaleX(0.9400);transform-origin:0 50%;">358728</div>
<svg class="r" style="left:946.00px;top:944.19px;" width="12" height="10" viewBox="0 0 12 10"><rect x="0.3" y="0" width="1.8" height="9.5" fill="#8e2436"/><rect x="3.9" y="0" width="1.5" height="9.5" fill="#8e2436"/><rect x="6.2" y="0" width="1.4" height="9.5" fill="#8e2436"/><rect x="9.1" y="0" width="2.2" height="9.5" fill="#8e2436"/></svg>
<svg class="r" style="left:962.30px;top:943.49px;" width="12" height="10" viewBox="0 0 12 10"><path d="M0 1.7 H11 M0 5 H11 M0 8.2 H11" stroke="#8e2436" stroke-width="1"/><path d="M4 0 V3.4 M7 3.3 V6.7 M4 6.5 V9.9" stroke="#8e2436" stroke-width="1.4"/></svg>
<svg class="r" style="left:977.50px;top:942.49px;" width="13" height="12" viewBox="0 0 13 12"><path d="M2.7 2.6 A5.1 5.1 0 1 1 1.6 7.2" fill="none" stroke="#8e2436" stroke-width="1.1"/><path d="M0.8 0.8 L3.3 3.2 L0.9 3.9 Z" fill="#8e2436" stroke="#8e2436" stroke-width="0.6"/><path d="M5 3.8 L7.6 6.8" fill="none" stroke="#8e2436" stroke-width="1.1"/></svg>
<div class="t" style="left:1041.55px;top:940.00px;font-size:11px;line-height:18px;color:#3b4150;transform:scaleX(0.9400);transform-origin:0 50%;">205</div>
<div class="t" style="left:1060.80px;top:943.00px;font-size:9px;line-height:14px;color:#56a07f;transform:scaleX(0.9468);transform-origin:0 50%;-webkit-text-stroke:0.15px #56a07f;">kg</div>
<div class="t" style="left:1391.50px;top:940.00px;font-size:11px;line-height:18px;color:#3b4150;transform:scaleX(0.8913);transform-origin:0 50%;">53A</div>
<div class="t" style="left:1785.80px;top:940.00px;font-size:11px;line-height:18px;color:#3b4150;transform:scaleX(0.8811);transform-origin:0 50%;">LFBBA-314536</div>
<div class="r" style="left:264.00px;top:965.18px;width:1612.00px;height:28.78px;background:#fdfdff;"></div>
<div class="r" style="left:264.00px;top:993.96px;width:1612.00px;height:1.00px;background:#e7e8ee;"></div>
<div class="t" style="left:275.00px;top:971.00px;font-size:10.4px;line-height:17px;color:#2a7d70;transform:scaleX(0.7953);transform-origin:0 50%;">#0414</div>
<div class="t" style="left:301.00px;top:970.00px;font-size:11px;line-height:18px;color:#8c4e1c;transform:scaleX(0.9430);transform-origin:0 50%;">Céréales riz soufflé au chocolat FSE+ 2025</div>
<div class="t" style="left:874.00px;top:970.00px;font-size:11px;line-height:18px;color:#8e2436;transform:scaleX(0.9400);transform-origin:0 50%;">356688</div>
<svg class="r" style="left:946.00px;top:973.97px;" width="12" height="10" viewBox="0 0 12 10"><rect x="0.3" y="0" width="1.8" height="9.5" fill="#8e2436"/><rect x="3.9" y="0" width="1.5" height="9.5" fill="#8e2436"/><rect x="6.2" y="0" width="1.4" height="9.5" fill="#8e2436"/><rect x="9.1" y="0" width="2.2" height="9.5" fill="#8e2436"/></svg>
<svg class="r" style="left:962.30px;top:973.27px;" width="12" height="10" viewBox="0 0 12 10"><path d="M0 1.7 H11 M0 5 H11 M0 8.2 H11" stroke="#8e2436" stroke-width="1"/><path d="M4 0 V3.4 M7 3.3 V6.7 M4 6.5 V9.9" stroke="#8e2436" stroke-width="1.4"/></svg>
<svg class="r" style="left:977.50px;top:972.27px;" width="13" height="12" viewBox="0 0 13 12"><path d="M2.7 2.6 A5.1 5.1 0 1 1 1.6 7.2" fill="none" stroke="#8e2436" stroke-width="1.1"/><path d="M0.8 0.8 L3.3 3.2 L0.9 3.9 Z" fill="#8e2436" stroke="#8e2436" stroke-width="0.6"/><path d="M5 3.8 L7.6 6.8" fill="none" stroke="#8e2436" stroke-width="1.1"/></svg>
<div class="t" style="left:1041.55px;top:970.00px;font-size:11px;line-height:18px;color:#3b4150;transform:scaleX(0.9400);transform-origin:0 50%;">105</div>
<div class="t" style="left:1060.80px;top:973.00px;font-size:9px;line-height:14px;color:#56a07f;transform:scaleX(0.9468);transform-origin:0 50%;-webkit-text-stroke:0.15px #56a07f;">kg</div>
<div class="t" style="left:1153.25px;top:970.00px;font-size:11px;line-height:18px;color:#3b4150;transform:scaleX(0.9400);transform-origin:0 50%;">500</div>
<div class="t" style="left:1172.30px;top:973.00px;font-size:9px;line-height:14px;color:#56a07f;-webkit-text-stroke:0.15px #56a07f;">g</div>
<div class="t" style="left:1279.50px;top:970.00px;font-size:11px;line-height:18px;color:#3b4150;transform:scaleX(0.9400);transform-origin:0 50%;">21</div>
<div class="t" style="left:1352.25px;top:970.00px;font-size:11px;line-height:18px;color:#3b4150;transform:scaleX(0.9400);transform-origin:0 50%;">210</div>
<div class="t" style="left:1580.60px;top:972.00px;font-size:10.2px;line-height:16px;color:#2a7d70;transform:scaleX(0.7299);transform-origin:0 50%;">#EUR1</div>
<div class="t" style="left:1608.20px;top:970.00px;font-size:11px;line-height:18px;color:#8c4e1c;transform:scaleX(0.9125);transform-origin:0 50%;">80X120 Euro</div>
<div class="t" style="left:1785.80px;top:970.00px;font-size:11px;line-height:18px;color:#3b4150;transform:scaleX(0.8895);transform-origin:0 50%;">LBAL-312168</div>
<div class="r" style="left:264.00px;top:994.96px;width:1612.00px;height:28.78px;background:#f7f8fc;"></div>
<div class="r" style="left:264.00px;top:1023.74px;width:1612.00px;height:1.00px;background:#e7e8ee;"></div>
<div class="t" style="left:275.00px;top:1001.00px;font-size:10.4px;line-height:17px;color:#2a7d70;transform:scaleX(0.7953);transform-origin:0 50%;">#0603</div>
<div class="t" style="left:301.00px;top:1000.00px;font-size:11px;line-height:18px;color:#8c4e1c;letter-spacing:-0.196px;">Truffes au chocolat</div>
<div class="t" style="left:673.00px;top:1000.00px;font-size:11px;line-height:18px;color:#3b4150;transform:scaleX(0.8403);transform-origin:0 50%;">FICHE 278 L TRUFFES CHOCOLAT</div>
<div class="t" style="left:874.00px;top:1000.00px;font-size:11px;line-height:18px;color:#8e2436;transform:scaleX(0.9400);transform-origin:0 50%;">346378</div>
<svg class="r" style="left:946.00px;top:1003.75px;" width="12" height="10" viewBox="0 0 12 10"><rect x="0.3" y="0" width="1.8" height="9.5" fill="#8e2436"/><rect x="3.9" y="0" width="1.5" height="9.5" fill="#8e2436"/><rect x="6.2" y="0" width="1.4" height="9.5" fill="#8e2436"/><rect x="9.1" y="0" width="2.2" height="9.5" fill="#8e2436"/></svg>
<svg class="r" style="left:962.30px;top:1003.05px;" width="12" height="10" viewBox="0 0 12 10"><path d="M0 1.7 H11 M0 5 H11 M0 8.2 H11" stroke="#8e2436" stroke-width="1"/><path d="M4 0 V3.4 M7 3.3 V6.7 M4 6.5 V9.9" stroke="#8e2436" stroke-width="1.4"/></svg>
<svg class="r" style="left:977.50px;top:1002.05px;" width="13" height="12" viewBox="0 0 13 12"><path d="M2.7 2.6 A5.1 5.1 0 1 1 1.6 7.2" fill="none" stroke="#8e2436" stroke-width="1.1"/><path d="M0.8 0.8 L3.3 3.2 L0.9 3.9 Z" fill="#8e2436" stroke="#8e2436" stroke-width="0.6"/><path d="M5 3.8 L7.6 6.8" fill="none" stroke="#8e2436" stroke-width="1.1"/></svg>
<div class="t" style="left:1047.30px;top:1000.00px;font-size:11px;line-height:18px;color:#3b4150;transform:scaleX(0.9400);transform-origin:0 50%;">63</div>
<div class="t" style="left:1060.80px;top:1003.00px;font-size:9px;line-height:14px;color:#56a07f;transform:scaleX(0.9468);transform-origin:0 50%;-webkit-text-stroke:0.15px #56a07f;">kg</div>
<div class="t" style="left:1153.25px;top:1000.00px;font-size:11px;line-height:18px;color:#3b4150;transform:scaleX(0.9400);transform-origin:0 50%;">150</div>
<div class="t" style="left:1172.30px;top:1003.00px;font-size:9px;line-height:14px;color:#56a07f;-webkit-text-stroke:0.15px #56a07f;">g</div>
<div class="t" style="left:1279.50px;top:1000.00px;font-size:11px;line-height:18px;color:#3b4150;transform:scaleX(0.9400);transform-origin:0 50%;">35</div>
<div class="t" style="left:1352.25px;top:1000.00px;font-size:11px;line-height:18px;color:#3b4150;transform:scaleX(0.9400);transform-origin:0 50%;">420</div>
<div class="t" style="left:1391.50px;top:1000.00px;font-size:11px;line-height:18px;color:#3b4150;transform:scaleX(0.8888);transform-origin:0 50%;">37C</div>
<div class="t" style="left:1785.80px;top:1000.00px;font-size:11px;line-height:18px;color:#3b4150;transform:scaleX(0.8811);transform-origin:0 50%;">LFBBA-300618</div>
<div class="r" style="left:264.00px;top:1024.74px;width:1612.00px;height:28.78px;background:#fdfdff;"></div>
<div class="r" style="left:264.00px;top:1053.52px;width:1612.00px;height:1.00px;background:#e7e8ee;"></div>
<div class="t" style="left:275.00px;top:1031.00px;font-size:10.4px;line-height:17px;color:#2a7d70;transform:scaleX(0.7953);transform-origin:0 50%;">#0603</div>
<div class="t" style="left:301.00px;top:1030.00px;font-size:11px;line-height:18px;color:#8c4e1c;letter-spacing:-0.196px;">Truffes au chocolat</div>
<div class="t" style="left:673.00px;top:1030.00px;font-size:11px;line-height:18px;color:#3b4150;transform:scaleX(0.8403);transform-origin:0 50%;">FICHE 278 L TRUFFES CHOCOLAT</div>
<div class="t" style="left:874.00px;top:1030.00px;font-size:11px;line-height:18px;color:#8e2436;transform:scaleX(0.9400);transform-origin:0 50%;">346379</div>
<svg class="r" style="left:946.00px;top:1033.53px;" width="12" height="10" viewBox="0 0 12 10"><rect x="0.3" y="0" width="1.8" height="9.5" fill="#8e2436"/><rect x="3.9" y="0" width="1.5" height="9.5" fill="#8e2436"/><rect x="6.2" y="0" width="1.4" height="9.5" fill="#8e2436"/><rect x="9.1" y="0" width="2.2" height="9.5" fill="#8e2436"/></svg>
<svg class="r" style="left:962.30px;top:1032.83px;" width="12" height="10" viewBox="0 0 12 10"><path d="M0 1.7 H11 M0 5 H11 M0 8.2 H11" stroke="#8e2436" stroke-width="1"/><path d="M4 0 V3.4 M7 3.3 V6.7 M4 6.5 V9.9" stroke="#8e2436" stroke-width="1.4"/></svg>
<svg class="r" style="left:977.50px;top:1031.83px;" width="13" height="12" viewBox="0 0 13 12"><path d="M2.7 2.6 A5.1 5.1 0 1 1 1.6 7.2" fill="none" stroke="#8e2436" stroke-width="1.1"/><path d="M0.8 0.8 L3.3 3.2 L0.9 3.9 Z" fill="#8e2436" stroke="#8e2436" stroke-width="0.6"/><path d="M5 3.8 L7.6 6.8" fill="none" stroke="#8e2436" stroke-width="1.1"/></svg>
<div class="t" style="left:1047.30px;top:1030.00px;font-size:11px;line-height:18px;color:#3b4150;transform:scaleX(0.9400);transform-origin:0 50%;">63</div>
<div class="t" style="left:1060.80px;top:1033.00px;font-size:9px;line-height:14px;color:#56a07f;transform:scaleX(0.9468);transform-origin:0 50%;-webkit-text-stroke:0.15px #56a07f;">kg</div>
<div class="t" style="left:1153.25px;top:1030.00px;font-size:11px;line-height:18px;color:#3b4150;transform:scaleX(0.9400);transform-origin:0 50%;">150</div>
<div class="t" style="left:1172.30px;top:1033.00px;font-size:9px;line-height:14px;color:#56a07f;-webkit-text-stroke:0.15px #56a07f;">g</div>
<div class="t" style="left:1279.50px;top:1030.00px;font-size:11px;line-height:18px;color:#3b4150;transform:scaleX(0.9400);transform-origin:0 50%;">35</div>
<div class="t" style="left:1352.25px;top:1030.00px;font-size:11px;line-height:18px;color:#3b4150;transform:scaleX(0.9400);transform-origin:0 50%;">420</div>
<div class="t" style="left:1391.50px;top:1030.00px;font-size:11px;line-height:18px;color:#3b4150;transform:scaleX(0.8888);transform-origin:0 50%;">37C</div>
<div class="t" style="left:1785.80px;top:1030.00px;font-size:11px;line-height:18px;color:#3b4150;transform:scaleX(0.8811);transform-origin:0 50%;">LFBBA-300619</div>
<div class="r" style="left:275.30px;top:196.60px;width:820.20px;height:24.40px;background:#ffffff;border:1.2px solid #7d8290;border-radius:4px;box-sizing:border-box;"></div>
<div class="r" style="left:280.00px;top:200.60px;width:49.50px;height:15.90px;background:#f1f2f6;border-radius:2px;"></div>
<div class="t" style="left:288.00px;top:204.00px;font-size:8px;line-height:13px;color:#5a5f6a;transform:scaleX(0.9293);transform-origin:0 50%;">Article</div>
<svg class="r" style="left:313.20px;top:203.20px;" width="12" height="12" viewBox="0 0 12 12"><circle cx="6" cy="6" r="4.9" fill="none" stroke="#3a3a3a" stroke-width="1"/><path d="M4 4 L8 8 M8 4 L4 8" stroke="#3a3a3a" stroke-width="1"/></svg>
<div class="r" style="left:334.25px;top:200.60px;width:99.00px;height:15.90px;background:#f1f2f6;border-radius:2px;"></div>
<div class="t" style="left:342.00px;top:204.00px;font-size:8px;line-height:13px;color:#5a5f6a;letter-spacing:-0.177px;">Description complète</div>
<svg class="r" style="left:417.00px;top:203.20px;" width="12" height="12" viewBox="0 0 12 12"><circle cx="6" cy="6" r="4.9" fill="none" stroke="#3a3a3a" stroke-width="1"/><path d="M4 4 L8 8 M8 4 L4 8" stroke="#3a3a3a" stroke-width="1"/></svg>
<div class="r" style="left:438.25px;top:200.60px;width:49.75px;height:15.90px;background:#f1f2f6;border-radius:2px;"></div>
<div class="t" style="left:445.50px;top:204.00px;font-size:8px;line-height:13px;color:#5a5f6a;transform:scaleX(0.9334);transform-origin:0 50%;">Palette</div>
<svg class="r" style="left:472.00px;top:203.20px;" width="12" height="12" viewBox="0 0 12 12"><circle cx="6" cy="6" r="4.9" fill="none" stroke="#3a3a3a" stroke-width="1"/><path d="M4 4 L8 8 M8 4 L4 8" stroke="#3a3a3a" stroke-width="1"/></svg>
<div class="r" style="left:493.25px;top:200.60px;width:56.75px;height:15.90px;background:#f1f2f6;border-radius:2px;"></div>
<div class="t" style="left:501.50px;top:204.00px;font-size:8px;line-height:13px;color:#5a5f6a;transform:scaleX(0.9347);transform-origin:0 50%;">Quantité</div>
<svg class="r" style="left:534.00px;top:203.20px;" width="12" height="12" viewBox="0 0 12 12"><circle cx="6" cy="6" r="4.9" fill="none" stroke="#3a3a3a" stroke-width="1"/><path d="M4 4 L8 8 M8 4 L4 8" stroke="#3a3a3a" stroke-width="1"/></svg>
<div class="r" style="left:555.00px;top:200.60px;width:79.25px;height:15.90px;background:#f1f2f6;border-radius:2px;"></div>
<div class="t" style="left:563.00px;top:204.00px;font-size:8px;line-height:13px;color:#5a5f6a;transform:scaleX(0.9354);transform-origin:0 50%;">Unité Poids( g )</div>
<svg class="r" style="left:618.00px;top:203.20px;" width="12" height="12" viewBox="0 0 12 12"><circle cx="6" cy="6" r="4.9" fill="none" stroke="#3a3a3a" stroke-width="1"/><path d="M4 4 L8 8 M8 4 L4 8" stroke="#3a3a3a" stroke-width="1"/></svg>
<div class="r" style="left:639.50px;top:200.60px;width:81.75px;height:15.90px;background:#f1f2f6;border-radius:2px;"></div>
<div class="t" style="left:646.50px;top:204.00px;font-size:8px;line-height:13px;color:#5a5f6a;letter-spacing:-0.201px;">Nombre de colis</div>
<svg class="r" style="left:705.00px;top:203.20px;" width="12" height="12" viewBox="0 0 12 12"><circle cx="6" cy="6" r="4.9" fill="none" stroke="#3a3a3a" stroke-width="1"/><path d="M4 4 L8 8 M8 4 L4 8" stroke="#3a3a3a" stroke-width="1"/></svg>
<div class="r" style="left:725.50px;top:200.60px;width:62.50px;height:15.90px;background:#f1f2f6;border-radius:2px;"></div>
<div class="t" style="left:747.00px;top:204.00px;font-size:8px;line-height:13px;color:#5a5f6a;transform:scaleX(0.9270);transform-origin:0 50%;">Unités</div>
<svg class="r" style="left:772.00px;top:203.20px;" width="12" height="12" viewBox="0 0 12 12"><circle cx="6" cy="6" r="4.9" fill="none" stroke="#3a3a3a" stroke-width="1"/><path d="M4 4 L8 8 M8 4 L4 8" stroke="#3a3a3a" stroke-width="1"/></svg>
<div class="r" style="left:793.00px;top:200.60px;width:56.50px;height:15.90px;background:#f1f2f6;border-radius:2px;"></div>
<div class="t" style="left:800.50px;top:204.00px;font-size:8px;line-height:13px;color:#5a5f6a;transform:scaleX(0.9439);transform-origin:0 50%;">Location</div>
<svg class="r" style="left:833.50px;top:203.20px;" width="12" height="12" viewBox="0 0 12 12"><circle cx="6" cy="6" r="4.9" fill="none" stroke="#3a3a3a" stroke-width="1"/><path d="M4 4 L8 8 M8 4 L4 8" stroke="#3a3a3a" stroke-width="1"/></svg>
<div class="r" style="left:854.25px;top:200.60px;width:79.00px;height:15.90px;background:#f1f2f6;border-radius:2px;"></div>
<div class="t" style="left:862.00px;top:204.00px;font-size:8px;line-height:13px;color:#5a5f6a;letter-spacing:-0.153px;">Type de palette</div>
<svg class="r" style="left:917.50px;top:203.20px;" width="12" height="12" viewBox="0 0 12 12"><circle cx="6" cy="6" r="4.9" fill="none" stroke="#3a3a3a" stroke-width="1"/><path d="M4 4 L8 8 M8 4 L4 8" stroke="#3a3a3a" stroke-width="1"/></svg>
<div class="r" style="left:938.25px;top:200.60px;width:55.00px;height:15.90px;background:#f1f2f6;border-radius:2px;"></div>
<div class="t" style="left:946.00px;top:204.00px;font-size:8px;line-height:13px;color:#5a5f6a;transform:scaleX(0.9431);transform-origin:0 50%;">Vidange</div>
<svg class="r" style="left:977.50px;top:203.20px;" width="12" height="12" viewBox="0 0 12 12"><circle cx="6" cy="6" r="4.9" fill="none" stroke="#3a3a3a" stroke-width="1"/><path d="M4 4 L8 8 M8 4 L4 8" stroke="#3a3a3a" stroke-width="1"/></svg>
<div class="r" style="left:998.00px;top:200.60px;width:64.50px;height:15.90px;background:#f1f2f6;border-radius:2px;"></div>
<div class="t" style="left:1006.50px;top:204.00px;font-size:8px;line-height:13px;color:#5a5f6a;transform:scaleX(0.9485);transform-origin:0 50%;">Lot interne</div>
<svg class="r" style="left:1046.30px;top:203.20px;" width="12" height="12" viewBox="0 0 12 12"><circle cx="6" cy="6" r="4.9" fill="none" stroke="#3a3a3a" stroke-width="1"/><path d="M4 4 L8 8 M8 4 L4 8" stroke="#3a3a3a" stroke-width="1"/></svg>
<svg class="r" style="left:735.00px;top:205.00px;" width="8" height="8" viewBox="0 0 8 8"><rect width="8" height="8" rx="0.8" fill="#4a8fe0"/><path d="M2.5 1 V7 M5.5 1 V7" stroke="#fff" stroke-width="0.7"/></svg>
<div class="r" style="left:276.00px;top:223.20px;width:751.00px;height:204.30px;background:#ffffff;border-radius:3px;box-shadow:0 1px 4px rgba(40,40,60,0.18),0 0 1px rgba(40,40,60,0.2);"></div>
<div class="r" style="left:287.20px;top:236.20px;width:13.50px;height:12.50px;background:#ffffff;border:1px solid #cfd2d8;border-radius:2px;box-sizing:border-box;"></div>
<div class="r" style="left:306.20px;top:230.50px;width:710.60px;height:24.00px;background:#ffffff;border:1px solid #d5d8de;border-radius:3px;box-sizing:border-box;"></div>
<svg class="r" style="left:996.50px;top:236.00px;" width="12" height="12" viewBox="0 0 12 12"><circle cx="5" cy="5" r="4" fill="none" stroke="#888" stroke-width="0.9"/><path d="M8 8 L11 11" stroke="#888" stroke-width="0.9"/></svg>
<div class="r" style="left:288.00px;top:257.60px;width:12.00px;height:1.00px;background:#d5d8de;"></div>
<div class="r" style="left:280.00px;top:367.00px;width:730.00px;height:23.50px;background:#f2f3f7;"></div>
<div class="r" style="left:287.20px;top:270.80px;width:13.50px;height:12.50px;background:#ffffff;border:1px solid #cfd2d8;border-radius:2px;box-sizing:border-box;"></div>
<div class="t" style="left:306.20px;top:269.00px;font-size:10.9px;line-height:17px;color:#3a3f4a;letter-spacing:-0.214px;">Poids brut de l&#x27;unité</div>
<div class="r" style="left:287.20px;top:296.80px;width:13.50px;height:12.50px;background:#ffffff;border:1px solid #cfd2d8;border-radius:2px;box-sizing:border-box;"></div>
<div class="t" style="left:306.20px;top:295.00px;font-size:10.9px;line-height:17px;color:#3a3f4a;letter-spacing:-0.238px;">Lot fournisseur</div>
<div class="r" style="left:287.20px;top:321.80px;width:13.50px;height:12.50px;background:#ffffff;border:1px solid #cfd2d8;border-radius:2px;box-sizing:border-box;"></div>
<div class="t" style="left:306.20px;top:320.00px;font-size:10.9px;line-height:17px;color:#3a3f4a;letter-spacing:-0.246px;">Unités par colis</div>
<div class="r" style="left:287.20px;top:346.80px;width:13.50px;height:12.50px;background:#ffffff;border:1px solid #cfd2d8;border-radius:2px;box-sizing:border-box;"></div>
<div class="t" style="left:306.20px;top:345.00px;font-size:10.9px;line-height:17px;color:#3a3f4a;letter-spacing:-0.225px;">Origine de la réception</div>
<div class="r" style="left:287.20px;top:372.80px;width:13.50px;height:12.50px;background:#ffffff;border:1px solid #cfd2d8;border-radius:2px;box-sizing:border-box;"></div>
<div class="t" style="left:306.20px;top:371.00px;font-size:10.9px;line-height:17px;color:#3a3f4a;letter-spacing:-0.238px;">Zone de préparation</div>
<svg class="r" style="left:1014.50px;top:262.50px;" width="10" height="8" viewBox="0 0 10 8"><path d="M0.8 7 L5 0.8 L9.2 7 Z" fill="#8a8a8a"/></svg>
<div class="r" style="left:1015.00px;top:346.20px;width:8.80px;height:21.30px;background:#8a8a8a;border-radius:4.4px;"></div>
<svg class="r" style="left:1014.50px;top:380.00px;" width="10" height="8" viewBox="0 0 10 8"><path d="M0.8 1 L5 7.2 L9.2 1 Z" fill="#8a8a8a"/></svg>
<div class="t" style="left:285.50px;top:394.00px;font-size:10.6px;line-height:17px;color:#2f3440;font-weight:bold;letter-spacing:-0.177px;">11 colonnes sélectionnées</div>
<div class="r" style="left:420.00px;top:396.20px;width:73.80px;height:25.60px;background:#6259e8;border-radius:4px;"></div>
<div class="t" style="left:429.30px;top:401.00px;font-size:10.6px;line-height:17px;color:#ffffff;font-weight:bold;transform:scaleX(0.9278);transform-origin:0 50%;">Reinitialiser</div>
<div class="r" style="left:499.30px;top:396.20px;width:54.50px;height:25.60px;background:#4a3bd0;border-radius:4px;"></div>
<div class="t" style="left:507.50px;top:401.00px;font-size:10.6px;line-height:17px;color:#ffffff;font-weight:bold;letter-spacing:0.043px;">Re-trier</div>
<svg class="r" style="left:526.00px;top:407.00px;" width="16" height="17" viewBox="0 0 16 17"><path d="M8.8 3 Q9.9 1.2 11 3 V7.8 Q13.8 7.2 14.6 9.2 V12.5 Q14.6 16 11.3 16 H8.2 Q6.2 16 5.2 14.3 L2.2 10.5 Q1.8 9 3.5 9.3 L6.3 11.4 L8.8 11.4 Z" fill="#fff" stroke="#111" stroke-width="0.9" stroke-linejoin="round"/></svg>
<div class="r" style="left:0.00px;top:0.00px;width:1920.00px;height:40.00px;background:#d5e1f8;"></div>
<div class="r" style="left:7.00px;top:6.00px;width:26.00px;height:27.00px;background:#e8effc;border-radius:8px;"></div>
<svg class="r" style="left:14.00px;top:15.00px;" width="12" height="8" viewBox="0 0 12 8"><path d="M1.5 1.5 L6 6 L10.5 1.5" fill="none" stroke="#1f1f1f" stroke-width="1.8"/></svg>
<div class="r" style="left:40.00px;top:6.00px;width:232.00px;height:35.00px;background:#ffffff;border-radius:9px 9px 0 0;"></div>
<svg class="r" style="left:32.00px;top:32.00px;" width="8" height="8" viewBox="0 0 8 8"><path d="M0 8 Q8 8 8 0 L8 8 Z" fill="#fff"/></svg>
<svg class="r" style="left:272.00px;top:32.00px;" width="8" height="8" viewBox="0 0 8 8"><path d="M8 8 Q0 8 0 0 L0 8 Z" fill="#fff"/></svg>
<svg class="r" style="left:48.00px;top:12.00px;" width="16" height="17" viewBox="0 0 16 17"><path d="M8 0.5 L15.5 3.2 L14.3 13.2 L8 16.6 L1.7 13.2 L0.5 3.2 Z" fill="#1a1a1a"/><path d="M8 2.6 L3.6 12.6 L5.3 12.6 L6.2 10.3 L9.8 10.3 L10.7 12.6 L12.4 12.6 Z M6.8 8.8 L8 5.9 L9.2 8.8 Z" fill="#fff"/></svg>
<div class="t" style="left:72.00px;top:12.00px;font-size:12px;line-height:19px;color:#1f1f1f;letter-spacing:0.089px;">foodbanks-stock-app</div>
<svg class="r" style="left:250.00px;top:15.00px;" width="10" height="10" viewBox="0 0 10 10"><path d="M1 1 L9 9 M9 1 L1 9" stroke="#1f1f1f" stroke-width="1.6"/></svg>
<svg class="r" style="left:286.00px;top:14.00px;" width="12" height="12" viewBox="0 0 12 12"><path d="M6 0.5 V11.5 M0.5 6 H11.5" stroke="#1f1f1f" stroke-width="1.6"/></svg>
<div class="r" style="left:1799.00px;top:19.50px;width:12.00px;height:1.20px;background:#1f1f1f;"></div>
<svg class="r" style="left:1844.00px;top:14.00px;" width="13" height="13" viewBox="0 0 13 13"><rect x="1" y="3.5" width="8.5" height="8.5" rx="1.5" fill="none" stroke="#1f1f1f" stroke-width="1.1"/><path d="M3.5 1.2 H9.8 Q11.8 1.2 11.8 3.2 V9.5" fill="none" stroke="#1f1f1f" stroke-width="1.1"/></svg>
<svg class="r" style="left:1890.00px;top:13.00px;" width="14" height="14" viewBox="0 0 14 14"><path d="M1 1 L13 13 M13 1 L1 13" stroke="#1f1f1f" stroke-width="1.2"/></svg>
<div class="r" style="left:0.00px;top:40.00px;width:1920.00px;height:46.00px;background:#ffffff;border-radius:8px 8px 0 0;"></div>
<div class="r" style="left:0.00px;top:86.00px;width:1920.00px;height:1.00px;background:#d7d9de;"></div>
<svg class="r" style="left:15.00px;top:56.00px;" width="14" height="14" viewBox="0 0 14 14"><path d="M13 7 H2 M7 1.5 L1.5 7 L7 12.5" fill="none" stroke="#474747" stroke-width="1.7"/></svg>
<svg class="r" style="left:51.00px;top:56.00px;" width="14" height="14" viewBox="0 0 14 14"><path d="M1 7 H12 M7 1.5 L12.5 7 L7 12.5" fill="none" stroke="#b3b3b3" stroke-width="1.7"/></svg>
<svg class="r" style="left:87.00px;top:56.00px;" width="14" height="14" viewBox="0 0 14 14"><path d="M12 7 A5 5 0 1 1 10.5 3.3" fill="none" stroke="#474747" stroke-width="1.7"/><path d="M8.2 1 H12.5 V5.3 Z" fill="#474747"/></svg>
<div class="r" style="left:121.00px;top:46.00px;width:1589.00px;height:34.00px;background:#eef1f8;border-radius:17px;"></div>
<div class="r" style="left:124.00px;top:49.00px;width:28.00px;height:28.00px;background:#ffffff;border-radius:14px;"></div>
<svg class="r" style="left:131.00px;top:55.00px;" width="14" height="14" viewBox="0 0 14 14"><circle cx="3.5" cy="3.5" r="2" fill="none" stroke="#474747" stroke-width="1.5"/><path d="M7 3.5 H13" stroke="#474747" stroke-width="1.5"/><circle cx="10.5" cy="10.5" r="2" fill="none" stroke="#474747" stroke-width="1.5"/><path d="M1 10.5 H7" stroke="#474747" stroke-width="1.5"/></svg>
<div class="t" style="left:157.00px;top:52.00px;font-size:14px;line-height:22px;color:#1f1f1f;letter-spacing:0.074px;">dev.stock.foodbanksit.be/stock/app/fr-BE/stocks/list</div>
<svg class="r" style="left:1645.00px;top:55.00px;" width="16" height="16" viewBox="0 0 16 16"><circle cx="6.5" cy="6.5" r="5" fill="none" stroke="#474747" stroke-width="1.6"/><path d="M4 6.5 H9" stroke="#474747" stroke-width="1.6"/><path d="M10 10 L14.5 14.5" stroke="#474747" stroke-width="1.8"/></svg>
<svg class="r" style="left:1678.00px;top:55.00px;" width="16" height="16" viewBox="0 0 16 16"><path d="M8 1.3 L10 6 L15 6.3 L11.2 9.5 L12.4 14.5 L8 11.8 L3.6 14.5 L4.8 9.5 L1 6.3 L6 6 Z" fill="none" stroke="#474747" stroke-width="1.5" stroke-linejoin="round"/></svg>
<div class="r" style="left:1728.00px;top:57.00px;width:16.00px;height:13.00px;background:#ececec;opacity:0.8;"></div>
<svg class="r" style="left:1729.00px;top:58.00px;" width="15" height="12" viewBox="0 0 15 12"><path d="M2 4 L8 9 M5 3 L12 10" stroke="#bbb" stroke-width="1"/></svg>
<div class="r" style="left:1764.00px;top:55.00px;width:16.00px;height:16.00px;background:#2db742;"></div>
<svg class="r" style="left:1764.00px;top:55.00px;" width="16" height="16" viewBox="0 0 16 16"><path d="M3.3 8.2 L6.6 11.4 L12.8 4.6" fill="none" stroke="#fff" stroke-width="2.2"/></svg>
<svg class="r" style="left:1800.00px;top:54.00px;" width="18" height="18" viewBox="0 0 18 18"><path d="M2.5 5.5 H6 V4 A2 2 0 0 1 10 4 V5.5 H14 V8.5 A2 2 0 0 1 14 12.5 V15.5 H2.5 V12 A1.8 1.8 0 0 0 2.5 8.5 Z" fill="none" stroke="#474747" stroke-width="1.7" stroke-linejoin="round"/></svg>
<div class="r" style="left:1834.30px;top:55.00px;width:1.20px;height:16.00px;background:#c2d3f2;"></div>
<svg class="r" style="left:1852.00px;top:52.00px;" width="21" height="22" viewBox="0 0 21 22"><defs><clipPath id="av"><circle cx="10.5" cy="11" r="10.3"/></clipPath></defs><g clip-path="url(#av)"><rect width="21" height="22" fill="#f4f2f0"/><ellipse cx="10" cy="11.5" rx="7.6" ry="9.6" fill="#b8705a"/><path d="M2.5 6 Q10 -1.5 17.5 6 L17.5 3 Q10 -3 2.5 3 Z" fill="#6b4238"/><path d="M3.2 8.3 H16.8" stroke="#4a2e28" stroke-width="0.9"/><rect x="4" y="8" width="5" height="3.2" rx="1" fill="none" stroke="#4a2e28" stroke-width="0.8"/><rect x="11" y="8" width="5" height="3.2" rx="1" fill="none" stroke="#4a2e28" stroke-width="0.8"/><path d="M6.5 15.5 Q10 17 13.5 15.5" stroke="#7a3a30" stroke-width="0.8" fill="none"/><path d="M13 22 Q18.5 19.5 19 13 L21 13 L21 22 Z" fill="#1e1e1e"/></g></svg>
<div class="r" style="left:1896.50px;top:55.70px;width:2.60px;height:2.60px;background:#474747;border-radius:50%;"></div>
<div class="r" style="left:1896.50px;top:61.70px;width:2.60px;height:2.60px;background:#474747;border-radius:50%;"></div>
<div class="r" style="left:1896.50px;top:67.70px;width:2.60px;height:2.60px;background:#474747;border-radius:50%;"></div></body></html>
